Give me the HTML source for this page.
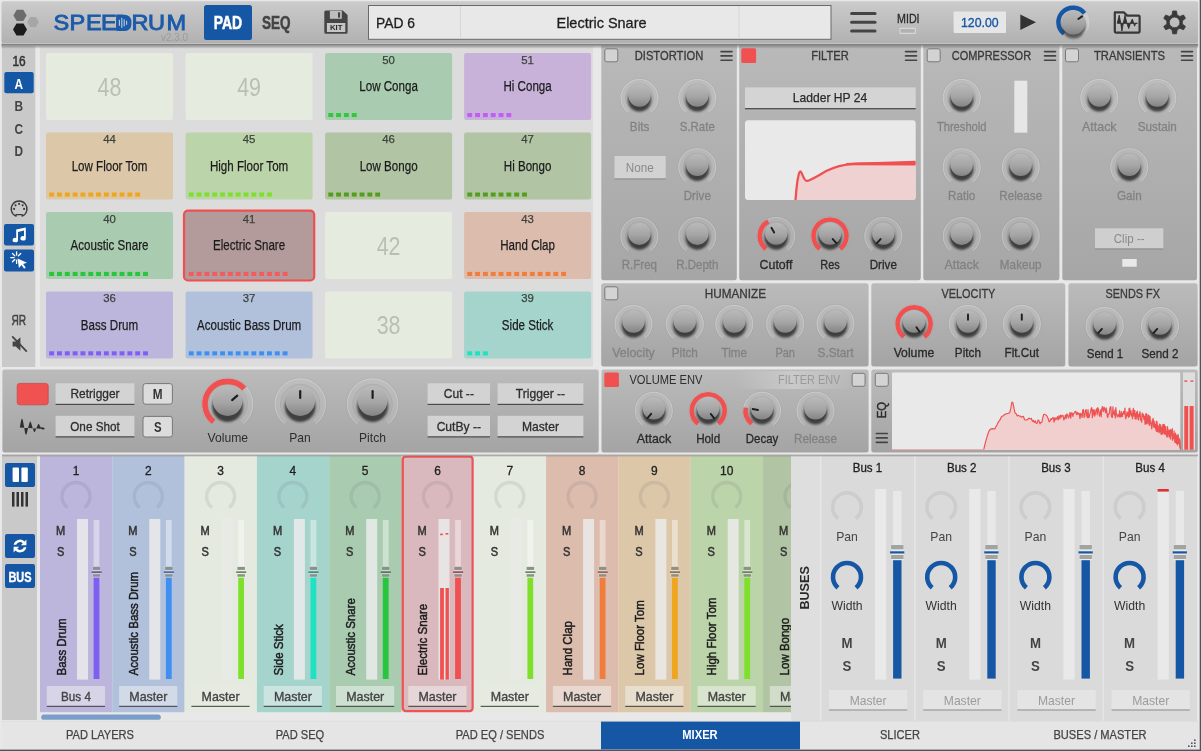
<!DOCTYPE html>
<html lang="en"><head><meta charset="utf-8"><title>Speedrum</title>
<style>html,body{margin:0;padding:0;background:#e8e8e8;overflow:hidden}svg{display:block;will-change:transform}text{font-family:"Liberation Sans",sans-serif}</style>
</head><body>
<svg width="1201" height="751" viewBox="0 0 1201 751">
<defs>
<linearGradient id="tb" x1="0" y1="0" x2="0" y2="1"><stop offset="0" stop-color="#cbcbcb"/><stop offset="1" stop-color="#b1b1b1"/></linearGradient>
<linearGradient id="pg" x1="0" y1="0" x2="0" y2="1"><stop offset="0" stop-color="#b9b9b9"/><stop offset="1" stop-color="#a6a6a6"/></linearGradient>
<linearGradient id="pg2" x1="0" y1="0" x2="0" y2="1"><stop offset="0" stop-color="#bbbbbb"/><stop offset="1" stop-color="#a4a4a4"/></linearGradient>
<linearGradient id="kg" x1="0" y1="0" x2="0" y2="1"><stop offset="0" stop-color="#bababa"/><stop offset="0.55" stop-color="#a5a5a5"/><stop offset="1" stop-color="#848484"/></linearGradient>
<filter id="bl" x="-50%" y="-50%" width="200%" height="200%"><feGaussianBlur stdDeviation="1.1"/></filter>
<filter id="bl2" x="-10%" y="-100%" width="120%" height="400%"><feGaussianBlur stdDeviation="1"/></filter>
</defs>

<rect x="0.00" y="0.00" width="1201.00" height="751.00" rx="0" fill="#e8e8e8"/>
<rect x="1.50" y="1.20" width="1196.70" height="42.20" rx="2" fill="url(#tb)"/>
<rect x="1.50" y="43.00" width="1196.70" height="1.10" rx="0" fill="#c2c2c2"/>
<polygon points="26.60,15.40 23.30,21.12 16.70,21.12 13.40,15.40 16.70,9.68 23.30,9.68" fill="#6c6c6c"/>
<polygon points="38.80,22.00 35.90,27.02 30.10,27.02 27.20,22.00 30.10,16.98 35.90,16.98" fill="#a6a6a6"/>
<polygon points="27.00,29.50 23.50,35.56 16.50,35.56 13.00,29.50 16.50,23.44 23.50,23.44" fill="#1c1c1c"/>
<text x="48.55 63.12 78.12 91.75 104.39 119.57 134.58 151.31" y="30.4" font-size="21.4" fill="#1b5ba9" stroke="#1b5ba9" stroke-width="0.85" transform="scale(1.1,1)">SPEEDRUM</text>
<path d="M116.5 14.9h8.6a6.3 6.3 0 0 1 6.3 6.3v3.4a6.3 6.3 0 0 1 -6.3 6.3h-8.6z" fill="#1b5ba9"/>
<rect x="118.85" y="19.80" width="1.10" height="6.00" rx="0" fill="#c4cbd6"/>
<rect x="121.25" y="17.80" width="1.10" height="10.00" rx="0" fill="#c4cbd6"/>
<rect x="123.65" y="19.30" width="1.10" height="7.00" rx="0" fill="#c4cbd6"/>
<rect x="126.05" y="20.80" width="1.10" height="4.00" rx="0" fill="#c4cbd6"/>
<text x="161.00" y="41.00" font-size="10" fill="#9a9a9a" textLength="27.00" lengthAdjust="spacingAndGlyphs">v2.3.0</text>
<rect x="204.00" y="5.00" width="48.00" height="35.00" rx="2.5" fill="#1657a5"/>
<text x="213.80" y="29.00" font-size="18.2" font-weight="bold" fill="#fff" textLength="28.40" lengthAdjust="spacingAndGlyphs" stroke="#fff" stroke-width="0.5">PAD</text>
<text x="261.90" y="29.00" font-size="18.2" font-weight="bold" fill="#444" textLength="28.60" lengthAdjust="spacingAndGlyphs" stroke="#444" stroke-width="0.5">SEQ</text>
<path d="M325.8 10.6h17l4.8 4.4v17.3a1.5 1.5 0 0 1 -1.5 1.5h-20.3a1.5 1.5 0 0 1 -1.5 -1.5v-20.2a1.5 1.5 0 0 1 1.5 -1.5z" fill="#454545"/>
<rect x="329.90" y="10.90" width="11.90" height="7.90" rx="0" fill="#bebebe"/>
<rect x="338.00" y="12.30" width="2.10" height="5.30" rx="0" fill="#454545"/>
<rect x="326.90" y="23.00" width="18.40" height="9.00" rx="0" fill="#c6c6c6"/>
<text x="329.90" y="29.90" font-size="6.4" font-weight="bold" fill="#2a2a2a" textLength="12.60" lengthAdjust="spacingAndGlyphs">KIT</text>
<rect x="368.50" y="5.50" width="462.50" height="33.80" rx="0" fill="#e8e8e8" stroke="#6a6a6a" stroke-width="1"/>
<rect x="460.00" y="6.00" width="1.00" height="33.00" rx="0" fill="#d6d6d6"/>
<rect x="738.50" y="6.00" width="1.00" height="33.00" rx="0" fill="#d6d6d6"/>
<text x="376.00" y="27.60" font-size="14.6" fill="#1e1e1e" textLength="39.00" lengthAdjust="spacingAndGlyphs" stroke="#1e1e1e" stroke-width="0.3">PAD 6</text>
<text x="556.50" y="27.60" font-size="14.6" fill="#1e1e1e" textLength="90.00" lengthAdjust="spacingAndGlyphs" stroke="#1e1e1e" stroke-width="0.3">Electric Snare</text>
<line x1="851.6" y1="13.6" x2="875" y2="13.6" stroke="#444" stroke-width="3.0" stroke-linecap="round"/>
<line x1="851.6" y1="22.3" x2="875" y2="22.3" stroke="#444" stroke-width="3.0" stroke-linecap="round"/>
<line x1="851.6" y1="31.0" x2="875" y2="31.0" stroke="#444" stroke-width="3.0" stroke-linecap="round"/>
<text x="897.00" y="22.50" font-size="12.4" fill="#2c2c2c" textLength="22.60" lengthAdjust="spacingAndGlyphs" stroke="#2c2c2c" stroke-width="0.3">MIDI</text>
<rect x="900.00" y="28.40" width="15.40" height="5.00" rx="0.5" fill="#b2b2b2" stroke="#d8d8d8" stroke-width="1.1"/>
<rect x="953.60" y="11.40" width="52.40" height="21.60" rx="1" fill="#e6e6e6"/>
<text x="961.00" y="27.00" font-size="13.4" fill="#1657a5" textLength="37.60" lengthAdjust="spacingAndGlyphs" stroke="#1657a5" stroke-width="0.35">120.00</text>
<path d="M1020.3 14.4L1036 22.2L1020.3 30z" fill="#333"/>
<path d="M1064.01 33.80A14.6 14.6 0 1 1 1081.99 33.80" fill="none" stroke="#9a9a9a" stroke-width="5.2" stroke-linecap="butt" opacity="0.25"/>
<path d="M1064.01 33.80A14.6 14.6 0 1 1 1081.99 33.80" fill="none" stroke="#cdcdcd" stroke-width="4.2" stroke-linecap="butt"/>
<path d="M1064.01 33.80A14.6 14.6 0 1 1 1084.50 13.31" fill="none" stroke="#1657a5" stroke-width="4.4" stroke-linecap="butt"/>
<circle cx="1073.6" cy="26.4" r="12" fill="#333" opacity="0.7" filter="url(#bl)"/>
<circle cx="1073.4" cy="22.4" r="12" fill="url(#kg)"/>
<line x1="1078.31" y1="18.96" x2="1082.08" y2="16.32" stroke="#222" stroke-width="2" stroke-linecap="round"/>
<path d="M1114.8 12.4h9l3.4 3.2h11.4a1 1 0 0 1 1 1v15a1 1 0 0 1 -1 1h-22.8a1 1 0 0 1 -1 -1v-18.2a1 1 0 0 1 1 -1z" fill="none" stroke="#383838" stroke-width="2.2" stroke-linejoin="round"/>
<path d="M1117.3 23.3L1119.2 15.2L1120.8 23.3L1121.9 31L1123.3 23.3L1125 15.2L1126.9 23.3L1128.7 28.6L1130.4 23.3L1132.3 19L1133.7 23.3L1134.6 26.2L1135.6 23.3L1137.4 23.3Z" fill="#303030" stroke="#303030" stroke-width="0.9" stroke-linejoin="round"/>
<path d="M1172.69,10.96 L1176.51,10.96 L1177.17,14.93 L1179.78,16.44 L1183.55,15.02 L1185.47,18.34 L1182.35,20.89 L1182.35,23.91 L1185.47,26.46 L1183.55,29.78 L1179.78,28.36 L1177.17,29.87 L1176.51,33.84 L1172.69,33.84 L1172.03,29.87 L1169.42,28.36 L1165.65,29.78 L1163.73,26.46 L1166.85,23.91 L1166.85,20.89 L1163.73,18.34 L1165.65,15.02 L1169.42,16.44 L1172.03,14.93Z M1179.8999999999999 22.4a5.3 5.3 0 1 0 -10.6 0a5.3 5.3 0 1 0 10.6 0z" fill="#3a3a3a" fill-rule="evenodd" stroke="#3a3a3a" stroke-width="0.8" stroke-linejoin="round"/>
<rect x="2.00" y="46.00" width="33.30" height="321.00" rx="0" fill="#c9c9c9"/>
<rect x="40.00" y="46.00" width="553.00" height="320.60" rx="0" fill="#dcdcdc"/>
<text x="12.50" y="65.80" font-size="14" fill="#333" textLength="13.20" lengthAdjust="spacingAndGlyphs" stroke="#333" stroke-width="0.55">16</text>
<rect x="4.30" y="72.00" width="29.40" height="21.30" rx="2" fill="#1657a5"/>
<text x="14.62" y="88.60" font-size="14.8" font-weight="bold" fill="#fff" textLength="8.55" lengthAdjust="spacingAndGlyphs">A</text>
<text x="14.62" y="111.10" font-size="14.8" font-weight="bold" fill="#444" textLength="8.55" lengthAdjust="spacingAndGlyphs">B</text>
<text x="14.62" y="133.60" font-size="14.8" font-weight="bold" fill="#444" textLength="8.55" lengthAdjust="spacingAndGlyphs">C</text>
<text x="14.62" y="156.10" font-size="14.8" font-weight="bold" fill="#444" textLength="8.55" lengthAdjust="spacingAndGlyphs">D</text>
<path d="M16 216.17a7.9 7.9 0 1 1 6.2 0v-1.5h-6.2z" fill="none" stroke="#3c3c3c" stroke-width="1.3" stroke-linejoin="round"/>
<circle cx="14.10" cy="208.90" r="1.05" fill="#3c3c3c"/>
<circle cx="15.56" cy="205.36" r="1.05" fill="#3c3c3c"/>
<circle cx="19.10" cy="203.90" r="1.05" fill="#3c3c3c"/>
<circle cx="22.64" cy="205.36" r="1.05" fill="#3c3c3c"/>
<circle cx="24.10" cy="208.90" r="1.05" fill="#3c3c3c"/>
<rect x="4.00" y="224.00" width="30.00" height="21.60" rx="2" fill="#1657a5"/>
<path d="M16.2 229.6l9.6 -2v10.6a2.7 2.2 0 1 1 -1.8 -2v-5.6l-6 1.3v8a2.7 2.2 0 1 1 -1.8 -2z" fill="#fff"/>
<rect x="4.00" y="249.60" width="30.00" height="21.90" rx="2" fill="#1657a5"/>
<path d="M17.6 258.6l9.4 4.2 -3.9 1.2 2.6 3.6 -1.6 1.1 -2.6 -3.6 -2.6 3z" fill="#fff"/>
<line x1="14.00" y1="257.60" x2="10.80" y2="257.60" stroke="#fff" stroke-width="1.3" stroke-linecap="round"/>
<line x1="14.76" y1="255.76" x2="12.50" y2="253.50" stroke="#fff" stroke-width="1.3" stroke-linecap="round"/>
<line x1="16.60" y1="255.00" x2="16.60" y2="251.80" stroke="#fff" stroke-width="1.3" stroke-linecap="round"/>
<line x1="18.44" y1="255.76" x2="20.70" y2="253.50" stroke="#fff" stroke-width="1.3" stroke-linecap="round"/>
<line x1="14.76" y1="259.44" x2="12.50" y2="261.70" stroke="#fff" stroke-width="1.3" stroke-linecap="round"/>
<line x1="16.60" y1="260.20" x2="16.60" y2="263.40" stroke="#fff" stroke-width="1.3" stroke-linecap="round"/>
<text x="11.50" y="324.80" font-size="14" fill="#444" textLength="14.60" lengthAdjust="spacingAndGlyphs" stroke="#444" stroke-width="0.5">ЯR</text>
<path d="M12.6 341.4h3.2l4.6 -4.2v13.6l-4.6 -4.2h-3.2z" fill="#444"/>
<line x1="12.2" y1="336.4" x2="26.8" y2="351.6" stroke="#444" stroke-width="1.8"/>
<rect x="46.00" y="53.10" width="127.00" height="67.00" rx="2" fill="#e6ebe0"/>
<text x="97.54" y="95.70" font-size="25" fill="#b9c0b3" textLength="23.91" lengthAdjust="spacingAndGlyphs">48</text>
<rect x="185.60" y="53.10" width="127.00" height="67.00" rx="2" fill="#e6ebe0"/>
<text x="237.14" y="95.70" font-size="25" fill="#b9c0b3" textLength="23.91" lengthAdjust="spacingAndGlyphs">49</text>
<rect x="325.10" y="53.10" width="127.00" height="67.00" rx="2" fill="#a9ccb0"/>
<text x="382.28" y="63.60" font-size="11.6" fill="#3c423c" textLength="12.64" lengthAdjust="spacingAndGlyphs" stroke="#3c423c" stroke-width="0.25">50</text>
<text x="359.31" y="91.20" font-size="15.4" fill="#1c1c1c" textLength="58.58" lengthAdjust="spacingAndGlyphs" stroke="#1c1c1c" stroke-width="0.25">Low Conga</text>
<rect x="328.30" y="113.00" width="4.90" height="4.10" rx="0" fill="#2fc83e"/>
<rect x="336.12" y="113.00" width="4.90" height="4.10" rx="0" fill="#2fc83e"/>
<rect x="343.94" y="113.00" width="4.90" height="4.10" rx="0" fill="#2fc83e"/>
<rect x="351.76" y="113.00" width="4.90" height="4.10" rx="0" fill="#2fc83e"/>
<rect x="464.10" y="53.10" width="127.00" height="67.00" rx="2" fill="#c8b2d9"/>
<text x="521.28" y="63.60" font-size="11.6" fill="#3c423c" textLength="12.64" lengthAdjust="spacingAndGlyphs" stroke="#3c423c" stroke-width="0.25">51</text>
<text x="503.46" y="91.20" font-size="15.4" fill="#1c1c1c" textLength="48.28" lengthAdjust="spacingAndGlyphs" stroke="#1c1c1c" stroke-width="0.25">Hi Conga</text>
<rect x="467.30" y="113.00" width="4.90" height="4.10" rx="0" fill="#c05ef2"/>
<rect x="475.12" y="113.00" width="4.90" height="4.10" rx="0" fill="#c05ef2"/>
<rect x="482.94" y="113.00" width="4.90" height="4.10" rx="0" fill="#c05ef2"/>
<rect x="490.76" y="113.00" width="4.90" height="4.10" rx="0" fill="#c05ef2"/>
<rect x="498.58" y="113.00" width="4.90" height="4.10" rx="0" fill="#c05ef2"/>
<rect x="506.40" y="113.00" width="4.90" height="4.10" rx="0" fill="#c05ef2"/>
<rect x="46.00" y="132.60" width="127.00" height="67.00" rx="2" fill="#dcc8a9"/>
<text x="103.18" y="143.10" font-size="11.6" fill="#3c423c" textLength="12.64" lengthAdjust="spacingAndGlyphs" stroke="#3c423c" stroke-width="0.25">44</text>
<text x="71.64" y="170.70" font-size="15.4" fill="#1c1c1c" textLength="75.73" lengthAdjust="spacingAndGlyphs" stroke="#1c1c1c" stroke-width="0.25">Low Floor Tom</text>
<rect x="49.20" y="192.50" width="4.90" height="4.10" rx="0" fill="#f0a51e"/>
<rect x="57.02" y="192.50" width="4.90" height="4.10" rx="0" fill="#f0a51e"/>
<rect x="64.84" y="192.50" width="4.90" height="4.10" rx="0" fill="#f0a51e"/>
<rect x="72.66" y="192.50" width="4.90" height="4.10" rx="0" fill="#f0a51e"/>
<rect x="80.48" y="192.50" width="4.90" height="4.10" rx="0" fill="#f0a51e"/>
<rect x="88.30" y="192.50" width="4.90" height="4.10" rx="0" fill="#f0a51e"/>
<rect x="96.12" y="192.50" width="4.90" height="4.10" rx="0" fill="#f0a51e"/>
<rect x="103.94" y="192.50" width="4.90" height="4.10" rx="0" fill="#f0a51e"/>
<rect x="111.76" y="192.50" width="4.90" height="4.10" rx="0" fill="#f0a51e"/>
<rect x="119.58" y="192.50" width="4.90" height="4.10" rx="0" fill="#f0a51e"/>
<rect x="127.40" y="192.50" width="4.90" height="4.10" rx="0" fill="#f0a51e"/>
<rect x="135.22" y="192.50" width="4.90" height="4.10" rx="0" fill="#f0a51e"/>
<rect x="185.60" y="132.60" width="127.00" height="67.00" rx="2" fill="#bcd4a9"/>
<text x="242.78" y="143.10" font-size="11.6" fill="#3c423c" textLength="12.64" lengthAdjust="spacingAndGlyphs" stroke="#3c423c" stroke-width="0.25">45</text>
<text x="209.95" y="170.70" font-size="15.4" fill="#1c1c1c" textLength="78.30" lengthAdjust="spacingAndGlyphs" stroke="#1c1c1c" stroke-width="0.25">High Floor Tom</text>
<rect x="188.80" y="192.50" width="4.90" height="4.10" rx="0" fill="#7fe02c"/>
<rect x="196.62" y="192.50" width="4.90" height="4.10" rx="0" fill="#7fe02c"/>
<rect x="204.44" y="192.50" width="4.90" height="4.10" rx="0" fill="#7fe02c"/>
<rect x="212.26" y="192.50" width="4.90" height="4.10" rx="0" fill="#7fe02c"/>
<rect x="220.08" y="192.50" width="4.90" height="4.10" rx="0" fill="#7fe02c"/>
<rect x="227.90" y="192.50" width="4.90" height="4.10" rx="0" fill="#7fe02c"/>
<rect x="235.72" y="192.50" width="4.90" height="4.10" rx="0" fill="#7fe02c"/>
<rect x="243.54" y="192.50" width="4.90" height="4.10" rx="0" fill="#7fe02c"/>
<rect x="251.36" y="192.50" width="4.90" height="4.10" rx="0" fill="#7fe02c"/>
<rect x="259.18" y="192.50" width="4.90" height="4.10" rx="0" fill="#7fe02c"/>
<rect x="267.00" y="192.50" width="4.90" height="4.10" rx="0" fill="#7fe02c"/>
<rect x="325.10" y="132.60" width="127.00" height="67.00" rx="2" fill="#b1c4a3"/>
<text x="382.28" y="143.10" font-size="11.6" fill="#3c423c" textLength="12.64" lengthAdjust="spacingAndGlyphs" stroke="#3c423c" stroke-width="0.25">46</text>
<text x="359.63" y="170.70" font-size="15.4" fill="#1c1c1c" textLength="57.95" lengthAdjust="spacingAndGlyphs" stroke="#1c1c1c" stroke-width="0.25">Low Bongo</text>
<rect x="328.30" y="192.50" width="4.90" height="4.10" rx="0" fill="#559e1c"/>
<rect x="336.12" y="192.50" width="4.90" height="4.10" rx="0" fill="#559e1c"/>
<rect x="343.94" y="192.50" width="4.90" height="4.10" rx="0" fill="#559e1c"/>
<rect x="351.76" y="192.50" width="4.90" height="4.10" rx="0" fill="#559e1c"/>
<rect x="359.58" y="192.50" width="4.90" height="4.10" rx="0" fill="#559e1c"/>
<rect x="367.40" y="192.50" width="4.90" height="4.10" rx="0" fill="#559e1c"/>
<rect x="375.22" y="192.50" width="4.90" height="4.10" rx="0" fill="#559e1c"/>
<rect x="464.10" y="132.60" width="127.00" height="67.00" rx="2" fill="#b1c4a3"/>
<text x="521.28" y="143.10" font-size="11.6" fill="#3c423c" textLength="12.64" lengthAdjust="spacingAndGlyphs" stroke="#3c423c" stroke-width="0.25">47</text>
<text x="503.78" y="170.70" font-size="15.4" fill="#1c1c1c" textLength="47.64" lengthAdjust="spacingAndGlyphs" stroke="#1c1c1c" stroke-width="0.25">Hi Bongo</text>
<rect x="467.30" y="192.50" width="4.90" height="4.10" rx="0" fill="#559e1c"/>
<rect x="475.12" y="192.50" width="4.90" height="4.10" rx="0" fill="#559e1c"/>
<rect x="482.94" y="192.50" width="4.90" height="4.10" rx="0" fill="#559e1c"/>
<rect x="490.76" y="192.50" width="4.90" height="4.10" rx="0" fill="#559e1c"/>
<rect x="498.58" y="192.50" width="4.90" height="4.10" rx="0" fill="#559e1c"/>
<rect x="506.40" y="192.50" width="4.90" height="4.10" rx="0" fill="#559e1c"/>
<rect x="514.22" y="192.50" width="4.90" height="4.10" rx="0" fill="#559e1c"/>
<rect x="522.04" y="192.50" width="4.90" height="4.10" rx="0" fill="#559e1c"/>
<rect x="46.00" y="212.00" width="127.00" height="67.00" rx="2" fill="#a9ccb0"/>
<text x="103.18" y="222.50" font-size="11.6" fill="#3c423c" textLength="12.64" lengthAdjust="spacingAndGlyphs" stroke="#3c423c" stroke-width="0.25">40</text>
<text x="70.56" y="250.10" font-size="15.4" fill="#1c1c1c" textLength="77.88" lengthAdjust="spacingAndGlyphs" stroke="#1c1c1c" stroke-width="0.25">Acoustic Snare</text>
<rect x="49.20" y="271.90" width="4.90" height="4.10" rx="0" fill="#27c63c"/>
<rect x="57.02" y="271.90" width="4.90" height="4.10" rx="0" fill="#27c63c"/>
<rect x="64.84" y="271.90" width="4.90" height="4.10" rx="0" fill="#27c63c"/>
<rect x="72.66" y="271.90" width="4.90" height="4.10" rx="0" fill="#27c63c"/>
<rect x="80.48" y="271.90" width="4.90" height="4.10" rx="0" fill="#27c63c"/>
<rect x="88.30" y="271.90" width="4.90" height="4.10" rx="0" fill="#27c63c"/>
<rect x="96.12" y="271.90" width="4.90" height="4.10" rx="0" fill="#27c63c"/>
<rect x="103.94" y="271.90" width="4.90" height="4.10" rx="0" fill="#27c63c"/>
<rect x="111.76" y="271.90" width="4.90" height="4.10" rx="0" fill="#27c63c"/>
<rect x="119.58" y="271.90" width="4.90" height="4.10" rx="0" fill="#27c63c"/>
<rect x="127.40" y="271.90" width="4.90" height="4.10" rx="0" fill="#27c63c"/>
<rect x="135.22" y="271.90" width="4.90" height="4.10" rx="0" fill="#27c63c"/>
<rect x="143.04" y="271.90" width="4.90" height="4.10" rx="0" fill="#27c63c"/>
<rect x="184.00" y="210.70" width="130.20" height="69.80" rx="4" fill="#b39a9b" stroke="#ee5052" stroke-width="2.2"/>
<text x="242.78" y="222.50" font-size="11.6" fill="#3c423c" textLength="12.64" lengthAdjust="spacingAndGlyphs" stroke="#3c423c" stroke-width="0.25">41</text>
<text x="213.06" y="250.10" font-size="15.4" fill="#1c1c1c" textLength="72.08" lengthAdjust="spacingAndGlyphs" stroke="#1c1c1c" stroke-width="0.25">Electric Snare</text>
<rect x="188.80" y="271.90" width="4.90" height="4.10" rx="0" fill="#f25c5c"/>
<rect x="196.62" y="271.90" width="4.90" height="4.10" rx="0" fill="#f25c5c"/>
<rect x="204.44" y="271.90" width="4.90" height="4.10" rx="0" fill="#f25c5c"/>
<rect x="212.26" y="271.90" width="4.90" height="4.10" rx="0" fill="#f25c5c"/>
<rect x="220.08" y="271.90" width="4.90" height="4.10" rx="0" fill="#f25c5c"/>
<rect x="227.90" y="271.90" width="4.90" height="4.10" rx="0" fill="#f25c5c"/>
<rect x="235.72" y="271.90" width="4.90" height="4.10" rx="0" fill="#f25c5c"/>
<rect x="243.54" y="271.90" width="4.90" height="4.10" rx="0" fill="#f25c5c"/>
<rect x="251.36" y="271.90" width="4.90" height="4.10" rx="0" fill="#f25c5c"/>
<rect x="259.18" y="271.90" width="4.90" height="4.10" rx="0" fill="#f25c5c"/>
<rect x="267.00" y="271.90" width="4.90" height="4.10" rx="0" fill="#f25c5c"/>
<rect x="274.82" y="271.90" width="4.90" height="4.10" rx="0" fill="#f25c5c"/>
<rect x="282.64" y="271.90" width="4.90" height="4.10" rx="0" fill="#f25c5c"/>
<rect x="325.10" y="212.00" width="127.00" height="67.00" rx="2" fill="#e6ebe0"/>
<text x="376.64" y="254.60" font-size="25" fill="#b9c0b3" textLength="23.91" lengthAdjust="spacingAndGlyphs">42</text>
<rect x="464.10" y="212.00" width="127.00" height="67.00" rx="2" fill="#dcbcad"/>
<text x="521.28" y="222.50" font-size="11.6" fill="#3c423c" textLength="12.64" lengthAdjust="spacingAndGlyphs" stroke="#3c423c" stroke-width="0.25">43</text>
<text x="500.24" y="250.10" font-size="15.4" fill="#1c1c1c" textLength="54.72" lengthAdjust="spacingAndGlyphs" stroke="#1c1c1c" stroke-width="0.25">Hand Clap</text>
<rect x="467.30" y="271.90" width="4.90" height="4.10" rx="0" fill="#f07d3c"/>
<rect x="475.12" y="271.90" width="4.90" height="4.10" rx="0" fill="#f07d3c"/>
<rect x="482.94" y="271.90" width="4.90" height="4.10" rx="0" fill="#f07d3c"/>
<rect x="490.76" y="271.90" width="4.90" height="4.10" rx="0" fill="#f07d3c"/>
<rect x="498.58" y="271.90" width="4.90" height="4.10" rx="0" fill="#f07d3c"/>
<rect x="506.40" y="271.90" width="4.90" height="4.10" rx="0" fill="#f07d3c"/>
<rect x="514.22" y="271.90" width="4.90" height="4.10" rx="0" fill="#f07d3c"/>
<rect x="522.04" y="271.90" width="4.90" height="4.10" rx="0" fill="#f07d3c"/>
<rect x="529.86" y="271.90" width="4.90" height="4.10" rx="0" fill="#f07d3c"/>
<rect x="537.68" y="271.90" width="4.90" height="4.10" rx="0" fill="#f07d3c"/>
<rect x="545.50" y="271.90" width="4.90" height="4.10" rx="0" fill="#f07d3c"/>
<rect x="553.32" y="271.90" width="4.90" height="4.10" rx="0" fill="#f07d3c"/>
<rect x="561.14" y="271.90" width="4.90" height="4.10" rx="0" fill="#f07d3c"/>
<rect x="46.00" y="291.40" width="127.00" height="67.00" rx="2" fill="#bcb5dc"/>
<text x="103.18" y="301.90" font-size="11.6" fill="#3c423c" textLength="12.64" lengthAdjust="spacingAndGlyphs" stroke="#3c423c" stroke-width="0.25">36</text>
<text x="80.87" y="329.50" font-size="15.4" fill="#1c1c1c" textLength="57.27" lengthAdjust="spacingAndGlyphs" stroke="#1c1c1c" stroke-width="0.25">Bass Drum</text>
<rect x="49.20" y="351.30" width="4.90" height="4.10" rx="0" fill="#7f5ff2"/>
<rect x="57.02" y="351.30" width="4.90" height="4.10" rx="0" fill="#7f5ff2"/>
<rect x="64.84" y="351.30" width="4.90" height="4.10" rx="0" fill="#7f5ff2"/>
<rect x="72.66" y="351.30" width="4.90" height="4.10" rx="0" fill="#7f5ff2"/>
<rect x="80.48" y="351.30" width="4.90" height="4.10" rx="0" fill="#7f5ff2"/>
<rect x="88.30" y="351.30" width="4.90" height="4.10" rx="0" fill="#7f5ff2"/>
<rect x="96.12" y="351.30" width="4.90" height="4.10" rx="0" fill="#7f5ff2"/>
<rect x="103.94" y="351.30" width="4.90" height="4.10" rx="0" fill="#7f5ff2"/>
<rect x="111.76" y="351.30" width="4.90" height="4.10" rx="0" fill="#7f5ff2"/>
<rect x="119.58" y="351.30" width="4.90" height="4.10" rx="0" fill="#7f5ff2"/>
<rect x="127.40" y="351.30" width="4.90" height="4.10" rx="0" fill="#7f5ff2"/>
<rect x="135.22" y="351.30" width="4.90" height="4.10" rx="0" fill="#7f5ff2"/>
<rect x="143.04" y="351.30" width="4.90" height="4.10" rx="0" fill="#7f5ff2"/>
<rect x="185.60" y="291.40" width="127.00" height="67.00" rx="2" fill="#b1c1dc"/>
<text x="242.78" y="301.90" font-size="11.6" fill="#3c423c" textLength="12.64" lengthAdjust="spacingAndGlyphs" stroke="#3c423c" stroke-width="0.25">37</text>
<text x="196.97" y="329.50" font-size="15.4" fill="#1c1c1c" textLength="104.25" lengthAdjust="spacingAndGlyphs" stroke="#1c1c1c" stroke-width="0.25">Acoustic Bass Drum</text>
<rect x="188.80" y="351.30" width="4.90" height="4.10" rx="0" fill="#3f8ff2"/>
<rect x="196.62" y="351.30" width="4.90" height="4.10" rx="0" fill="#3f8ff2"/>
<rect x="204.44" y="351.30" width="4.90" height="4.10" rx="0" fill="#3f8ff2"/>
<rect x="212.26" y="351.30" width="4.90" height="4.10" rx="0" fill="#3f8ff2"/>
<rect x="220.08" y="351.30" width="4.90" height="4.10" rx="0" fill="#3f8ff2"/>
<rect x="227.90" y="351.30" width="4.90" height="4.10" rx="0" fill="#3f8ff2"/>
<rect x="235.72" y="351.30" width="4.90" height="4.10" rx="0" fill="#3f8ff2"/>
<rect x="243.54" y="351.30" width="4.90" height="4.10" rx="0" fill="#3f8ff2"/>
<rect x="251.36" y="351.30" width="4.90" height="4.10" rx="0" fill="#3f8ff2"/>
<rect x="259.18" y="351.30" width="4.90" height="4.10" rx="0" fill="#3f8ff2"/>
<rect x="267.00" y="351.30" width="4.90" height="4.10" rx="0" fill="#3f8ff2"/>
<rect x="274.82" y="351.30" width="4.90" height="4.10" rx="0" fill="#3f8ff2"/>
<rect x="282.64" y="351.30" width="4.90" height="4.10" rx="0" fill="#3f8ff2"/>
<rect x="325.10" y="291.40" width="127.00" height="67.00" rx="2" fill="#e6ebe0"/>
<text x="376.64" y="334.00" font-size="25" fill="#b9c0b3" textLength="23.91" lengthAdjust="spacingAndGlyphs">38</text>
<rect x="464.10" y="291.40" width="127.00" height="67.00" rx="2" fill="#a5d4cc"/>
<text x="521.28" y="301.90" font-size="11.6" fill="#3c423c" textLength="12.64" lengthAdjust="spacingAndGlyphs" stroke="#3c423c" stroke-width="0.25">39</text>
<text x="501.85" y="329.50" font-size="15.4" fill="#1c1c1c" textLength="51.49" lengthAdjust="spacingAndGlyphs" stroke="#1c1c1c" stroke-width="0.25">Side Stick</text>
<rect x="467.30" y="351.30" width="4.90" height="4.10" rx="0" fill="#1fe2c3"/>
<rect x="475.12" y="351.30" width="4.90" height="4.10" rx="0" fill="#1fe2c3"/>
<rect x="482.94" y="351.30" width="4.90" height="4.10" rx="0" fill="#1fe2c3"/>
<rect x="601.30" y="45.20" width="135.50" height="235.10" rx="2.5" fill="url(#pg)"/>
<rect x="739.20" y="45.20" width="181.60" height="235.10" rx="2.5" fill="url(#pg)"/>
<rect x="923.30" y="45.20" width="136.10" height="235.10" rx="2.5" fill="url(#pg)"/>
<rect x="1062.30" y="45.20" width="134.70" height="235.10" rx="2.5" fill="url(#pg)"/>
<rect x="601.30" y="45.20" width="135.50" height="4.00" rx="0" fill="#b9b9b9"/>
<rect x="739.20" y="45.20" width="181.60" height="4.00" rx="0" fill="#b9b9b9"/>
<rect x="923.30" y="45.20" width="136.10" height="4.00" rx="0" fill="#b9b9b9"/>
<rect x="1062.30" y="45.20" width="134.70" height="4.00" rx="0" fill="#b9b9b9"/>
<rect x="604.80" y="48.80" width="13.00" height="13.00" rx="2" fill="#d3d3d3" stroke="#787878" stroke-width="1"/>
<text x="634.75" y="59.80" font-size="12" fill="#3a3a3a" textLength="68.50" lengthAdjust="spacingAndGlyphs" stroke="#3a3a3a" stroke-width="0.3">DISTORTION</text>
<line x1="721" y1="51.6" x2="732" y2="51.6" stroke="#444" stroke-width="1.6" stroke-linecap="round"/>
<line x1="721" y1="55.9" x2="732" y2="55.9" stroke="#444" stroke-width="1.6" stroke-linecap="round"/>
<line x1="721" y1="60.2" x2="732" y2="60.2" stroke="#444" stroke-width="1.6" stroke-linecap="round"/>
<path d="M629.34 110.90A16.5 16.5 0 1 1 649.66 110.90" fill="none" stroke="#ffffff" stroke-width="4.6" stroke-linecap="butt" opacity="0.09"/>
<path d="M627.59 113.15A19.35 19.35 0 1 1 651.41 113.15" fill="none" stroke="#6a6a6a" stroke-width="0.7" stroke-linecap="butt" opacity="0.16"/>
<path d="M628.05 112.56A18.6 18.6 0 1 1 650.95 112.56" fill="none" stroke="#ffffff" stroke-width="0.9" stroke-linecap="butt" opacity="0.3"/>
<path d="M630.82 109.01A14.1 14.1 0 1 1 648.18 109.01" fill="none" stroke="#606060" stroke-width="0.8" stroke-linecap="butt" opacity="0.13"/>
<circle cx="639.50" cy="99.90" r="11.7" fill="#2a2a2a" opacity="0.84" filter="url(#bl)"/>
<circle cx="639.50" cy="95.50" r="11.2" fill="url(#kg)"/>
<path d="M687.14 110.90A16.5 16.5 0 1 1 707.46 110.90" fill="none" stroke="#ffffff" stroke-width="4.6" stroke-linecap="butt" opacity="0.09"/>
<path d="M685.39 113.15A19.35 19.35 0 1 1 709.21 113.15" fill="none" stroke="#6a6a6a" stroke-width="0.7" stroke-linecap="butt" opacity="0.16"/>
<path d="M685.85 112.56A18.6 18.6 0 1 1 708.75 112.56" fill="none" stroke="#ffffff" stroke-width="0.9" stroke-linecap="butt" opacity="0.3"/>
<path d="M688.62 109.01A14.1 14.1 0 1 1 705.98 109.01" fill="none" stroke="#606060" stroke-width="0.8" stroke-linecap="butt" opacity="0.13"/>
<circle cx="697.30" cy="99.90" r="11.7" fill="#2a2a2a" opacity="0.84" filter="url(#bl)"/>
<circle cx="697.30" cy="95.50" r="11.2" fill="url(#kg)"/>
<text x="629.85" y="130.60" font-size="12.6" fill="#828282" textLength="19.50" lengthAdjust="spacingAndGlyphs" stroke="#828282" stroke-width="0.3">Bits</text>
<text x="679.80" y="130.60" font-size="12.6" fill="#828282" textLength="35.00" lengthAdjust="spacingAndGlyphs" stroke="#828282" stroke-width="0.3">S.Rate</text>
<rect x="614.50" y="156.00" width="51.20" height="22.60" rx="0" fill="#d2d2d2"/>
<rect x="614.50" y="178.40" width="51.20" height="1.20" rx="0" fill="#8f8f8f"/>
<text x="625.80" y="171.60" font-size="12.6" fill="#8a8a8a" textLength="28.00" lengthAdjust="spacingAndGlyphs">None</text>
<path d="M687.14 180.20A16.5 16.5 0 1 1 707.46 180.20" fill="none" stroke="#ffffff" stroke-width="4.6" stroke-linecap="butt" opacity="0.09"/>
<path d="M685.39 182.45A19.35 19.35 0 1 1 709.21 182.45" fill="none" stroke="#6a6a6a" stroke-width="0.7" stroke-linecap="butt" opacity="0.16"/>
<path d="M685.85 181.86A18.6 18.6 0 1 1 708.75 181.86" fill="none" stroke="#ffffff" stroke-width="0.9" stroke-linecap="butt" opacity="0.3"/>
<path d="M688.62 178.31A14.1 14.1 0 1 1 705.98 178.31" fill="none" stroke="#606060" stroke-width="0.8" stroke-linecap="butt" opacity="0.13"/>
<circle cx="697.30" cy="169.20" r="11.7" fill="#2a2a2a" opacity="0.84" filter="url(#bl)"/>
<circle cx="697.30" cy="164.80" r="11.2" fill="url(#kg)"/>
<text x="683.70" y="199.70" font-size="12.6" fill="#828282" textLength="27.20" lengthAdjust="spacingAndGlyphs" stroke="#828282" stroke-width="0.3">Drive</text>
<path d="M629.24 249.10A16.5 16.5 0 1 1 649.56 249.10" fill="none" stroke="#ffffff" stroke-width="4.6" stroke-linecap="butt" opacity="0.09"/>
<path d="M627.49 251.35A19.35 19.35 0 1 1 651.31 251.35" fill="none" stroke="#6a6a6a" stroke-width="0.7" stroke-linecap="butt" opacity="0.16"/>
<path d="M627.95 250.76A18.6 18.6 0 1 1 650.85 250.76" fill="none" stroke="#ffffff" stroke-width="0.9" stroke-linecap="butt" opacity="0.3"/>
<path d="M630.72 247.21A14.1 14.1 0 1 1 648.08 247.21" fill="none" stroke="#606060" stroke-width="0.8" stroke-linecap="butt" opacity="0.13"/>
<circle cx="639.40" cy="238.10" r="11.7" fill="#2a2a2a" opacity="0.84" filter="url(#bl)"/>
<circle cx="639.40" cy="233.70" r="11.2" fill="url(#kg)"/>
<path d="M687.14 249.10A16.5 16.5 0 1 1 707.46 249.10" fill="none" stroke="#ffffff" stroke-width="4.6" stroke-linecap="butt" opacity="0.09"/>
<path d="M685.39 251.35A19.35 19.35 0 1 1 709.21 251.35" fill="none" stroke="#6a6a6a" stroke-width="0.7" stroke-linecap="butt" opacity="0.16"/>
<path d="M685.85 250.76A18.6 18.6 0 1 1 708.75 250.76" fill="none" stroke="#ffffff" stroke-width="0.9" stroke-linecap="butt" opacity="0.3"/>
<path d="M688.62 247.21A14.1 14.1 0 1 1 705.98 247.21" fill="none" stroke="#606060" stroke-width="0.8" stroke-linecap="butt" opacity="0.13"/>
<circle cx="697.30" cy="238.10" r="11.7" fill="#2a2a2a" opacity="0.84" filter="url(#bl)"/>
<circle cx="697.30" cy="233.70" r="11.2" fill="url(#kg)"/>
<text x="621.80" y="268.70" font-size="12.6" fill="#828282" textLength="35.20" lengthAdjust="spacingAndGlyphs" stroke="#828282" stroke-width="0.3">R.Freq</text>
<text x="676.20" y="268.70" font-size="12.6" fill="#828282" textLength="42.20" lengthAdjust="spacingAndGlyphs" stroke="#828282" stroke-width="0.3">R.Depth</text>
<rect x="741.30" y="48.20" width="14.80" height="14.80" rx="1.5" fill="#f05050"/>
<text x="811.19" y="59.80" font-size="12" fill="#3a3a3a" textLength="37.61" lengthAdjust="spacingAndGlyphs" stroke="#3a3a3a" stroke-width="0.3">FILTER</text>
<line x1="905.5" y1="51.6" x2="916.5" y2="51.6" stroke="#444" stroke-width="1.6" stroke-linecap="round"/>
<line x1="905.5" y1="55.9" x2="916.5" y2="55.9" stroke="#444" stroke-width="1.6" stroke-linecap="round"/>
<line x1="905.5" y1="60.2" x2="916.5" y2="60.2" stroke="#444" stroke-width="1.6" stroke-linecap="round"/>
<rect x="745.00" y="87.40" width="170.70" height="20.80" rx="0" fill="#d4d4d4"/>
<rect x="745.00" y="108.10" width="170.70" height="1.20" rx="0" fill="#484848"/>
<text x="792.81" y="102.00" font-size="13" fill="#2a2a2a" textLength="74.38" lengthAdjust="spacingAndGlyphs" stroke="#2a2a2a" stroke-width="0.25">Ladder HP 24</text>
<rect x="745.00" y="120.20" width="170.70" height="79.80" rx="3" fill="#e9e9e9"/>
<clipPath id="fc"><rect x="745" y="120.2" width="170.7" height="79.8" rx="3"/></clipPath>
<g clip-path="url(#fc)"><path d="M795.5 200C796.3 190 797 181 798.3 176.5C799 172.5 799.8 171.2 800.4 171.3C802 171.5 803.5 180.6 806.7 180.8C810 181 818 175.5 826.7 170.8C835 166.6 843 164.6 853.3 163.8C865 163.2 890 163.2 915.7 163V200Z" fill="#efd1d1"/><path d="M795.5 200C796.3 190 797 181 798.3 176.5C799 172.5 799.8 171.2 800.4 171.3C802 171.5 803.5 180.6 806.7 180.8C810 181 818 175.5 826.7 170.8C835 166.6 843 164.6 853.3 163.8C865 163.2 890 163.2 915.7 163" fill="none" stroke="#f05050" stroke-width="2.3"/><path d="M846 162.9L915.7 160.8V165.4L846 165.3Z" fill="#f05050"/></g>
<path d="M766.04 249.00A16.5 16.5 0 1 1 786.36 249.00" fill="none" stroke="#ffffff" stroke-width="4.6" stroke-linecap="butt" opacity="0.09"/>
<path d="M764.29 251.25A19.35 19.35 0 1 1 788.11 251.25" fill="none" stroke="#6a6a6a" stroke-width="0.7" stroke-linecap="butt" opacity="0.16"/>
<path d="M764.75 250.66A18.6 18.6 0 1 1 787.65 250.66" fill="none" stroke="#ffffff" stroke-width="0.9" stroke-linecap="butt" opacity="0.3"/>
<path d="M767.52 247.11A14.1 14.1 0 1 1 784.88 247.11" fill="none" stroke="#606060" stroke-width="0.8" stroke-linecap="butt" opacity="0.13"/>
<path d="M766.04 249.00A16.5 16.5 0 0 1 768.35 221.49" fill="none" stroke="#f05050" stroke-width="4.6" stroke-linecap="butt"/>
<circle cx="776.20" cy="238.00" r="11.7" fill="#2a2a2a" opacity="0.84" filter="url(#bl)"/>
<circle cx="776.20" cy="233.60" r="11.2" fill="url(#kg)"/>
<line x1="774.15" y1="232.45" x2="771.45" y2="227.77" stroke="#1e1e1e" stroke-width="1.9" stroke-linecap="round"/>
<path d="M819.84 249.00A16.5 16.5 0 1 1 840.16 249.00" fill="none" stroke="#ffffff" stroke-width="4.6" stroke-linecap="butt" opacity="0.09"/>
<path d="M818.09 251.25A19.35 19.35 0 1 1 841.91 251.25" fill="none" stroke="#6a6a6a" stroke-width="0.7" stroke-linecap="butt" opacity="0.16"/>
<path d="M818.55 250.66A18.6 18.6 0 1 1 841.45 250.66" fill="none" stroke="#ffffff" stroke-width="0.9" stroke-linecap="butt" opacity="0.3"/>
<path d="M821.32 247.11A14.1 14.1 0 1 1 838.68 247.11" fill="none" stroke="#606060" stroke-width="0.8" stroke-linecap="butt" opacity="0.13"/>
<path d="M819.84 249.00A16.5 16.5 0 1 1 840.16 249.00" fill="none" stroke="#f05050" stroke-width="4.6" stroke-linecap="butt"/>
<circle cx="830.00" cy="238.00" r="11.7" fill="#2a2a2a" opacity="0.84" filter="url(#bl)"/>
<circle cx="830.00" cy="233.60" r="11.2" fill="url(#kg)"/>
<line x1="832.74" y1="239.05" x2="836.36" y2="243.06" stroke="#1e1e1e" stroke-width="1.9" stroke-linecap="round"/>
<path d="M873.14 249.00A16.5 16.5 0 1 1 893.46 249.00" fill="none" stroke="#ffffff" stroke-width="4.6" stroke-linecap="butt" opacity="0.09"/>
<path d="M871.39 251.25A19.35 19.35 0 1 1 895.21 251.25" fill="none" stroke="#6a6a6a" stroke-width="0.7" stroke-linecap="butt" opacity="0.16"/>
<path d="M871.85 250.66A18.6 18.6 0 1 1 894.75 250.66" fill="none" stroke="#ffffff" stroke-width="0.9" stroke-linecap="butt" opacity="0.3"/>
<path d="M874.62 247.11A14.1 14.1 0 1 1 891.98 247.11" fill="none" stroke="#606060" stroke-width="0.8" stroke-linecap="butt" opacity="0.13"/>
<circle cx="883.30" cy="238.00" r="11.7" fill="#2a2a2a" opacity="0.84" filter="url(#bl)"/>
<circle cx="883.30" cy="233.60" r="11.2" fill="url(#kg)"/>
<line x1="880.56" y1="239.05" x2="876.94" y2="243.06" stroke="#1e1e1e" stroke-width="1.9" stroke-linecap="round"/>
<text x="759.60" y="268.70" font-size="12.6" fill="#2a2a2a" textLength="32.80" lengthAdjust="spacingAndGlyphs" stroke="#2a2a2a" stroke-width="0.3">Cutoff</text>
<text x="820.25" y="268.70" font-size="12.6" fill="#2a2a2a" textLength="19.50" lengthAdjust="spacingAndGlyphs" stroke="#2a2a2a" stroke-width="0.3">Res</text>
<text x="869.70" y="268.70" font-size="12.6" fill="#2a2a2a" textLength="27.20" lengthAdjust="spacingAndGlyphs" stroke="#2a2a2a" stroke-width="0.3">Drive</text>
<rect x="927.20" y="48.80" width="13.00" height="13.00" rx="2" fill="#d3d3d3" stroke="#787878" stroke-width="1"/>
<text x="951.70" y="59.80" font-size="12" fill="#3a3a3a" textLength="79.40" lengthAdjust="spacingAndGlyphs" stroke="#3a3a3a" stroke-width="0.3">COMPRESSOR</text>
<line x1="1044.5" y1="51.6" x2="1055.5" y2="51.6" stroke="#444" stroke-width="1.6" stroke-linecap="round"/>
<line x1="1044.5" y1="55.9" x2="1055.5" y2="55.9" stroke="#444" stroke-width="1.6" stroke-linecap="round"/>
<line x1="1044.5" y1="60.2" x2="1055.5" y2="60.2" stroke="#444" stroke-width="1.6" stroke-linecap="round"/>
<path d="M951.54 110.90A16.5 16.5 0 1 1 971.86 110.90" fill="none" stroke="#ffffff" stroke-width="4.6" stroke-linecap="butt" opacity="0.09"/>
<path d="M949.79 113.15A19.35 19.35 0 1 1 973.61 113.15" fill="none" stroke="#6a6a6a" stroke-width="0.7" stroke-linecap="butt" opacity="0.16"/>
<path d="M950.25 112.56A18.6 18.6 0 1 1 973.15 112.56" fill="none" stroke="#ffffff" stroke-width="0.9" stroke-linecap="butt" opacity="0.3"/>
<path d="M953.02 109.01A14.1 14.1 0 1 1 970.38 109.01" fill="none" stroke="#606060" stroke-width="0.8" stroke-linecap="butt" opacity="0.13"/>
<circle cx="961.70" cy="99.90" r="11.7" fill="#2a2a2a" opacity="0.84" filter="url(#bl)"/>
<circle cx="961.70" cy="95.50" r="11.2" fill="url(#kg)"/>
<text x="936.90" y="130.60" font-size="12.6" fill="#828282" textLength="49.60" lengthAdjust="spacingAndGlyphs" stroke="#828282" stroke-width="0.3">Threshold</text>
<rect x="1014.30" y="80.70" width="13.00" height="52.00" rx="0" fill="#e6e6e6"/>
<path d="M951.54 180.20A16.5 16.5 0 1 1 971.86 180.20" fill="none" stroke="#ffffff" stroke-width="4.6" stroke-linecap="butt" opacity="0.09"/>
<path d="M949.79 182.45A19.35 19.35 0 1 1 973.61 182.45" fill="none" stroke="#6a6a6a" stroke-width="0.7" stroke-linecap="butt" opacity="0.16"/>
<path d="M950.25 181.86A18.6 18.6 0 1 1 973.15 181.86" fill="none" stroke="#ffffff" stroke-width="0.9" stroke-linecap="butt" opacity="0.3"/>
<path d="M953.02 178.31A14.1 14.1 0 1 1 970.38 178.31" fill="none" stroke="#606060" stroke-width="0.8" stroke-linecap="butt" opacity="0.13"/>
<circle cx="961.70" cy="169.20" r="11.7" fill="#2a2a2a" opacity="0.84" filter="url(#bl)"/>
<circle cx="961.70" cy="164.80" r="11.2" fill="url(#kg)"/>
<path d="M1010.54 180.20A16.5 16.5 0 1 1 1030.86 180.20" fill="none" stroke="#ffffff" stroke-width="4.6" stroke-linecap="butt" opacity="0.09"/>
<path d="M1008.79 182.45A19.35 19.35 0 1 1 1032.61 182.45" fill="none" stroke="#6a6a6a" stroke-width="0.7" stroke-linecap="butt" opacity="0.16"/>
<path d="M1009.25 181.86A18.6 18.6 0 1 1 1032.15 181.86" fill="none" stroke="#ffffff" stroke-width="0.9" stroke-linecap="butt" opacity="0.3"/>
<path d="M1012.02 178.31A14.1 14.1 0 1 1 1029.38 178.31" fill="none" stroke="#606060" stroke-width="0.8" stroke-linecap="butt" opacity="0.13"/>
<circle cx="1020.70" cy="169.20" r="11.7" fill="#2a2a2a" opacity="0.84" filter="url(#bl)"/>
<circle cx="1020.70" cy="164.80" r="11.2" fill="url(#kg)"/>
<text x="948.02" y="199.70" font-size="12.6" fill="#828282" textLength="27.35" lengthAdjust="spacingAndGlyphs" stroke="#828282" stroke-width="0.3">Ratio</text>
<text x="999.20" y="199.70" font-size="12.6" fill="#828282" textLength="42.99" lengthAdjust="spacingAndGlyphs" stroke="#828282" stroke-width="0.3">Release</text>
<path d="M951.54 249.10A16.5 16.5 0 1 1 971.86 249.10" fill="none" stroke="#ffffff" stroke-width="4.6" stroke-linecap="butt" opacity="0.09"/>
<path d="M949.79 251.35A19.35 19.35 0 1 1 973.61 251.35" fill="none" stroke="#6a6a6a" stroke-width="0.7" stroke-linecap="butt" opacity="0.16"/>
<path d="M950.25 250.76A18.6 18.6 0 1 1 973.15 250.76" fill="none" stroke="#ffffff" stroke-width="0.9" stroke-linecap="butt" opacity="0.3"/>
<path d="M953.02 247.21A14.1 14.1 0 1 1 970.38 247.21" fill="none" stroke="#606060" stroke-width="0.8" stroke-linecap="butt" opacity="0.13"/>
<circle cx="961.70" cy="238.10" r="11.7" fill="#2a2a2a" opacity="0.84" filter="url(#bl)"/>
<circle cx="961.70" cy="233.70" r="11.2" fill="url(#kg)"/>
<path d="M1010.54 249.10A16.5 16.5 0 1 1 1030.86 249.10" fill="none" stroke="#ffffff" stroke-width="4.6" stroke-linecap="butt" opacity="0.09"/>
<path d="M1008.79 251.35A19.35 19.35 0 1 1 1032.61 251.35" fill="none" stroke="#6a6a6a" stroke-width="0.7" stroke-linecap="butt" opacity="0.16"/>
<path d="M1009.25 250.76A18.6 18.6 0 1 1 1032.15 250.76" fill="none" stroke="#ffffff" stroke-width="0.9" stroke-linecap="butt" opacity="0.3"/>
<path d="M1012.02 247.21A14.1 14.1 0 1 1 1029.38 247.21" fill="none" stroke="#606060" stroke-width="0.8" stroke-linecap="butt" opacity="0.13"/>
<circle cx="1020.70" cy="238.10" r="11.7" fill="#2a2a2a" opacity="0.84" filter="url(#bl)"/>
<circle cx="1020.70" cy="233.70" r="11.2" fill="url(#kg)"/>
<text x="944.45" y="268.70" font-size="12.6" fill="#828282" textLength="34.50" lengthAdjust="spacingAndGlyphs" stroke="#828282" stroke-width="0.3">Attack</text>
<text x="999.86" y="268.70" font-size="12.6" fill="#828282" textLength="41.68" lengthAdjust="spacingAndGlyphs" stroke="#828282" stroke-width="0.3">Makeup</text>
<rect x="1065.50" y="48.80" width="13.00" height="13.00" rx="2" fill="#d3d3d3" stroke="#787878" stroke-width="1"/>
<text x="1094.00" y="59.80" font-size="12" fill="#3a3a3a" textLength="71.00" lengthAdjust="spacingAndGlyphs" stroke="#3a3a3a" stroke-width="0.3">TRANSIENTS</text>
<line x1="1181.5" y1="51.6" x2="1192.5" y2="51.6" stroke="#444" stroke-width="1.6" stroke-linecap="round"/>
<line x1="1181.5" y1="55.9" x2="1192.5" y2="55.9" stroke="#444" stroke-width="1.6" stroke-linecap="round"/>
<line x1="1181.5" y1="60.2" x2="1192.5" y2="60.2" stroke="#444" stroke-width="1.6" stroke-linecap="round"/>
<path d="M1089.14 110.90A16.5 16.5 0 1 1 1109.46 110.90" fill="none" stroke="#ffffff" stroke-width="4.6" stroke-linecap="butt" opacity="0.09"/>
<path d="M1087.39 113.15A19.35 19.35 0 1 1 1111.21 113.15" fill="none" stroke="#6a6a6a" stroke-width="0.7" stroke-linecap="butt" opacity="0.16"/>
<path d="M1087.85 112.56A18.6 18.6 0 1 1 1110.75 112.56" fill="none" stroke="#ffffff" stroke-width="0.9" stroke-linecap="butt" opacity="0.3"/>
<path d="M1090.62 109.01A14.1 14.1 0 1 1 1107.98 109.01" fill="none" stroke="#606060" stroke-width="0.8" stroke-linecap="butt" opacity="0.13"/>
<circle cx="1099.30" cy="99.90" r="11.7" fill="#2a2a2a" opacity="0.84" filter="url(#bl)"/>
<circle cx="1099.30" cy="95.50" r="11.2" fill="url(#kg)"/>
<path d="M1147.14 110.90A16.5 16.5 0 1 1 1167.46 110.90" fill="none" stroke="#ffffff" stroke-width="4.6" stroke-linecap="butt" opacity="0.09"/>
<path d="M1145.39 113.15A19.35 19.35 0 1 1 1169.21 113.15" fill="none" stroke="#6a6a6a" stroke-width="0.7" stroke-linecap="butt" opacity="0.16"/>
<path d="M1145.85 112.56A18.6 18.6 0 1 1 1168.75 112.56" fill="none" stroke="#ffffff" stroke-width="0.9" stroke-linecap="butt" opacity="0.3"/>
<path d="M1148.62 109.01A14.1 14.1 0 1 1 1165.98 109.01" fill="none" stroke="#606060" stroke-width="0.8" stroke-linecap="butt" opacity="0.13"/>
<circle cx="1157.30" cy="99.90" r="11.7" fill="#2a2a2a" opacity="0.84" filter="url(#bl)"/>
<circle cx="1157.30" cy="95.50" r="11.2" fill="url(#kg)"/>
<text x="1082.05" y="130.60" font-size="12.6" fill="#828282" textLength="34.50" lengthAdjust="spacingAndGlyphs" stroke="#828282" stroke-width="0.3">Attack</text>
<text x="1137.76" y="130.60" font-size="12.6" fill="#828282" textLength="39.08" lengthAdjust="spacingAndGlyphs" stroke="#828282" stroke-width="0.3">Sustain</text>
<path d="M1119.14 180.20A16.5 16.5 0 1 1 1139.46 180.20" fill="none" stroke="#ffffff" stroke-width="4.6" stroke-linecap="butt" opacity="0.09"/>
<path d="M1117.39 182.45A19.35 19.35 0 1 1 1141.21 182.45" fill="none" stroke="#6a6a6a" stroke-width="0.7" stroke-linecap="butt" opacity="0.16"/>
<path d="M1117.85 181.86A18.6 18.6 0 1 1 1140.75 181.86" fill="none" stroke="#ffffff" stroke-width="0.9" stroke-linecap="butt" opacity="0.3"/>
<path d="M1120.62 178.31A14.1 14.1 0 1 1 1137.98 178.31" fill="none" stroke="#606060" stroke-width="0.8" stroke-linecap="butt" opacity="0.13"/>
<circle cx="1129.30" cy="169.20" r="11.7" fill="#2a2a2a" opacity="0.84" filter="url(#bl)"/>
<circle cx="1129.30" cy="164.80" r="11.2" fill="url(#kg)"/>
<text x="1116.92" y="199.70" font-size="12.6" fill="#828282" textLength="24.75" lengthAdjust="spacingAndGlyphs" stroke="#828282" stroke-width="0.3">Gain</text>
<rect x="1095.00" y="228.30" width="68.30" height="20.30" rx="0" fill="#cfcfcf"/>
<rect x="1095.00" y="248.40" width="68.30" height="1.20" rx="0" fill="#8f8f8f"/>
<text x="1113.75" y="243.40" font-size="12.6" fill="#8a8a8a" textLength="30.91" lengthAdjust="spacingAndGlyphs">Clip --</text>
<rect x="1122.30" y="259.00" width="14.40" height="7.70" rx="0" fill="#e8e8e8"/>
<rect x="601.20" y="283.20" width="267.40" height="83.40" rx="2.5" fill="url(#pg2)"/>
<rect x="871.30" y="283.20" width="194.00" height="83.40" rx="2.5" fill="url(#pg2)"/>
<rect x="1068.40" y="283.20" width="129.20" height="83.40" rx="2.5" fill="url(#pg2)"/>
<rect x="604.80" y="286.80" width="13.00" height="13.00" rx="2" fill="#d3d3d3" stroke="#787878" stroke-width="1"/>
<text x="704.80" y="298.20" font-size="12" fill="#3a3a3a" textLength="61.20" lengthAdjust="spacingAndGlyphs" stroke="#3a3a3a" stroke-width="0.3">HUMANIZE</text>
<path d="M623.34 336.90A16.5 16.5 0 1 1 643.66 336.90" fill="none" stroke="#ffffff" stroke-width="4.6" stroke-linecap="butt" opacity="0.09"/>
<path d="M621.59 339.15A19.35 19.35 0 1 1 645.41 339.15" fill="none" stroke="#6a6a6a" stroke-width="0.7" stroke-linecap="butt" opacity="0.16"/>
<path d="M622.05 338.56A18.6 18.6 0 1 1 644.95 338.56" fill="none" stroke="#ffffff" stroke-width="0.9" stroke-linecap="butt" opacity="0.3"/>
<path d="M624.82 335.01A14.1 14.1 0 1 1 642.18 335.01" fill="none" stroke="#606060" stroke-width="0.8" stroke-linecap="butt" opacity="0.13"/>
<circle cx="633.50" cy="325.90" r="11.7" fill="#2a2a2a" opacity="0.84" filter="url(#bl)"/>
<circle cx="633.50" cy="321.50" r="11.2" fill="url(#kg)"/>
<text x="612.25" y="356.80" font-size="12.6" fill="#828282" textLength="42.50" lengthAdjust="spacingAndGlyphs" stroke="#828282" stroke-width="0.3">Velocity</text>
<path d="M674.64 336.90A16.5 16.5 0 1 1 694.96 336.90" fill="none" stroke="#ffffff" stroke-width="4.6" stroke-linecap="butt" opacity="0.09"/>
<path d="M672.89 339.15A19.35 19.35 0 1 1 696.71 339.15" fill="none" stroke="#6a6a6a" stroke-width="0.7" stroke-linecap="butt" opacity="0.16"/>
<path d="M673.35 338.56A18.6 18.6 0 1 1 696.25 338.56" fill="none" stroke="#ffffff" stroke-width="0.9" stroke-linecap="butt" opacity="0.3"/>
<path d="M676.12 335.01A14.1 14.1 0 1 1 693.48 335.01" fill="none" stroke="#606060" stroke-width="0.8" stroke-linecap="butt" opacity="0.13"/>
<circle cx="684.80" cy="325.90" r="11.7" fill="#2a2a2a" opacity="0.84" filter="url(#bl)"/>
<circle cx="684.80" cy="321.50" r="11.2" fill="url(#kg)"/>
<text x="671.77" y="356.80" font-size="12.6" fill="#828282" textLength="26.05" lengthAdjust="spacingAndGlyphs" stroke="#828282" stroke-width="0.3">Pitch</text>
<path d="M724.14 336.90A16.5 16.5 0 1 1 744.46 336.90" fill="none" stroke="#ffffff" stroke-width="4.6" stroke-linecap="butt" opacity="0.09"/>
<path d="M722.39 339.15A19.35 19.35 0 1 1 746.21 339.15" fill="none" stroke="#6a6a6a" stroke-width="0.7" stroke-linecap="butt" opacity="0.16"/>
<path d="M722.85 338.56A18.6 18.6 0 1 1 745.75 338.56" fill="none" stroke="#ffffff" stroke-width="0.9" stroke-linecap="butt" opacity="0.3"/>
<path d="M725.62 335.01A14.1 14.1 0 1 1 742.98 335.01" fill="none" stroke="#606060" stroke-width="0.8" stroke-linecap="butt" opacity="0.13"/>
<circle cx="734.30" cy="325.90" r="11.7" fill="#2a2a2a" opacity="0.84" filter="url(#bl)"/>
<circle cx="734.30" cy="321.50" r="11.2" fill="url(#kg)"/>
<text x="721.50" y="356.80" font-size="12.6" fill="#828282" textLength="25.60" lengthAdjust="spacingAndGlyphs" stroke="#828282" stroke-width="0.3">Time</text>
<path d="M775.04 336.90A16.5 16.5 0 1 1 795.36 336.90" fill="none" stroke="#ffffff" stroke-width="4.6" stroke-linecap="butt" opacity="0.09"/>
<path d="M773.29 339.15A19.35 19.35 0 1 1 797.11 339.15" fill="none" stroke="#6a6a6a" stroke-width="0.7" stroke-linecap="butt" opacity="0.16"/>
<path d="M773.75 338.56A18.6 18.6 0 1 1 796.65 338.56" fill="none" stroke="#ffffff" stroke-width="0.9" stroke-linecap="butt" opacity="0.3"/>
<path d="M776.52 335.01A14.1 14.1 0 1 1 793.88 335.01" fill="none" stroke="#606060" stroke-width="0.8" stroke-linecap="butt" opacity="0.13"/>
<circle cx="785.20" cy="325.90" r="11.7" fill="#2a2a2a" opacity="0.84" filter="url(#bl)"/>
<circle cx="785.20" cy="321.50" r="11.2" fill="url(#kg)"/>
<text x="775.45" y="356.80" font-size="12.6" fill="#828282" textLength="19.50" lengthAdjust="spacingAndGlyphs" stroke="#828282" stroke-width="0.3">Pan</text>
<path d="M825.34 336.90A16.5 16.5 0 1 1 845.66 336.90" fill="none" stroke="#ffffff" stroke-width="4.6" stroke-linecap="butt" opacity="0.09"/>
<path d="M823.59 339.15A19.35 19.35 0 1 1 847.41 339.15" fill="none" stroke="#6a6a6a" stroke-width="0.7" stroke-linecap="butt" opacity="0.16"/>
<path d="M824.05 338.56A18.6 18.6 0 1 1 846.95 338.56" fill="none" stroke="#ffffff" stroke-width="0.9" stroke-linecap="butt" opacity="0.3"/>
<path d="M826.82 335.01A14.1 14.1 0 1 1 844.18 335.01" fill="none" stroke="#606060" stroke-width="0.8" stroke-linecap="butt" opacity="0.13"/>
<circle cx="835.50" cy="325.90" r="11.7" fill="#2a2a2a" opacity="0.84" filter="url(#bl)"/>
<circle cx="835.50" cy="321.50" r="11.2" fill="url(#kg)"/>
<text x="817.59" y="356.80" font-size="12.6" fill="#828282" textLength="35.82" lengthAdjust="spacingAndGlyphs" stroke="#828282" stroke-width="0.3">S.Start</text>
<text x="941.40" y="298.20" font-size="12" fill="#3a3a3a" textLength="54.00" lengthAdjust="spacingAndGlyphs" stroke="#3a3a3a" stroke-width="0.3">VELOCITY</text>
<path d="M903.94 336.90A16.5 16.5 0 1 1 924.26 336.90" fill="none" stroke="#ffffff" stroke-width="4.6" stroke-linecap="butt" opacity="0.09"/>
<path d="M902.19 339.15A19.35 19.35 0 1 1 926.01 339.15" fill="none" stroke="#6a6a6a" stroke-width="0.7" stroke-linecap="butt" opacity="0.16"/>
<path d="M902.65 338.56A18.6 18.6 0 1 1 925.55 338.56" fill="none" stroke="#ffffff" stroke-width="0.9" stroke-linecap="butt" opacity="0.3"/>
<path d="M905.42 335.01A14.1 14.1 0 1 1 922.78 335.01" fill="none" stroke="#606060" stroke-width="0.8" stroke-linecap="butt" opacity="0.13"/>
<path d="M903.94 336.90A16.5 16.5 0 1 1 924.26 336.90" fill="none" stroke="#f05050" stroke-width="4.6" stroke-linecap="butt"/>
<circle cx="914.10" cy="325.90" r="11.7" fill="#2a2a2a" opacity="0.84" filter="url(#bl)"/>
<circle cx="914.10" cy="321.50" r="11.2" fill="url(#kg)"/>
<line x1="916.45" y1="327.26" x2="919.55" y2="331.68" stroke="#1e1e1e" stroke-width="1.9" stroke-linecap="round"/>
<path d="M957.84 336.90A16.5 16.5 0 1 1 978.16 336.90" fill="none" stroke="#ffffff" stroke-width="4.6" stroke-linecap="butt" opacity="0.09"/>
<path d="M956.09 339.15A19.35 19.35 0 1 1 979.91 339.15" fill="none" stroke="#6a6a6a" stroke-width="0.7" stroke-linecap="butt" opacity="0.16"/>
<path d="M956.55 338.56A18.6 18.6 0 1 1 979.45 338.56" fill="none" stroke="#ffffff" stroke-width="0.9" stroke-linecap="butt" opacity="0.3"/>
<path d="M959.32 335.01A14.1 14.1 0 1 1 976.68 335.01" fill="none" stroke="#606060" stroke-width="0.8" stroke-linecap="butt" opacity="0.13"/>
<circle cx="968.00" cy="325.90" r="11.7" fill="#2a2a2a" opacity="0.84" filter="url(#bl)"/>
<circle cx="968.00" cy="321.50" r="11.2" fill="url(#kg)"/>
<line x1="968.00" y1="319.80" x2="968.00" y2="314.40" stroke="#1e1e1e" stroke-width="1.9" stroke-linecap="round"/>
<path d="M1011.64 336.90A16.5 16.5 0 1 1 1031.96 336.90" fill="none" stroke="#ffffff" stroke-width="4.6" stroke-linecap="butt" opacity="0.09"/>
<path d="M1009.89 339.15A19.35 19.35 0 1 1 1033.71 339.15" fill="none" stroke="#6a6a6a" stroke-width="0.7" stroke-linecap="butt" opacity="0.16"/>
<path d="M1010.35 338.56A18.6 18.6 0 1 1 1033.25 338.56" fill="none" stroke="#ffffff" stroke-width="0.9" stroke-linecap="butt" opacity="0.3"/>
<path d="M1013.12 335.01A14.1 14.1 0 1 1 1030.48 335.01" fill="none" stroke="#606060" stroke-width="0.8" stroke-linecap="butt" opacity="0.13"/>
<circle cx="1021.80" cy="325.90" r="11.7" fill="#2a2a2a" opacity="0.84" filter="url(#bl)"/>
<circle cx="1021.80" cy="321.50" r="11.2" fill="url(#kg)"/>
<line x1="1021.80" y1="319.80" x2="1021.80" y2="314.40" stroke="#1e1e1e" stroke-width="1.9" stroke-linecap="round"/>
<text x="893.65" y="356.80" font-size="12.6" fill="#2a2a2a" textLength="40.70" lengthAdjust="spacingAndGlyphs" stroke="#2a2a2a" stroke-width="0.3">Volume</text>
<text x="954.87" y="356.80" font-size="12.6" fill="#2a2a2a" textLength="26.05" lengthAdjust="spacingAndGlyphs" stroke="#2a2a2a" stroke-width="0.3">Pitch</text>
<text x="1004.55" y="356.80" font-size="12.6" fill="#2a2a2a" textLength="34.51" lengthAdjust="spacingAndGlyphs" stroke="#2a2a2a" stroke-width="0.3">Flt.Cut</text>
<text x="1105.60" y="298.20" font-size="12" fill="#3a3a3a" textLength="54.40" lengthAdjust="spacingAndGlyphs" stroke="#3a3a3a" stroke-width="0.3">SENDS FX</text>
<path d="M1094.54 338.90A16.5 16.5 0 1 1 1114.86 338.90" fill="none" stroke="#ffffff" stroke-width="4.6" stroke-linecap="butt" opacity="0.09"/>
<path d="M1092.79 341.15A19.35 19.35 0 1 1 1116.61 341.15" fill="none" stroke="#6a6a6a" stroke-width="0.7" stroke-linecap="butt" opacity="0.16"/>
<path d="M1093.25 340.56A18.6 18.6 0 1 1 1116.15 340.56" fill="none" stroke="#ffffff" stroke-width="0.9" stroke-linecap="butt" opacity="0.3"/>
<path d="M1096.02 337.01A14.1 14.1 0 1 1 1113.38 337.01" fill="none" stroke="#606060" stroke-width="0.8" stroke-linecap="butt" opacity="0.13"/>
<circle cx="1104.70" cy="327.90" r="11.7" fill="#2a2a2a" opacity="0.84" filter="url(#bl)"/>
<circle cx="1104.70" cy="323.50" r="11.2" fill="url(#kg)"/>
<line x1="1101.96" y1="328.95" x2="1098.34" y2="332.96" stroke="#1e1e1e" stroke-width="1.9" stroke-linecap="round"/>
<path d="M1149.84 338.90A16.5 16.5 0 1 1 1170.16 338.90" fill="none" stroke="#ffffff" stroke-width="4.6" stroke-linecap="butt" opacity="0.09"/>
<path d="M1148.09 341.15A19.35 19.35 0 1 1 1171.91 341.15" fill="none" stroke="#6a6a6a" stroke-width="0.7" stroke-linecap="butt" opacity="0.16"/>
<path d="M1148.55 340.56A18.6 18.6 0 1 1 1171.45 340.56" fill="none" stroke="#ffffff" stroke-width="0.9" stroke-linecap="butt" opacity="0.3"/>
<path d="M1151.32 337.01A14.1 14.1 0 1 1 1168.68 337.01" fill="none" stroke="#606060" stroke-width="0.8" stroke-linecap="butt" opacity="0.13"/>
<circle cx="1160.00" cy="327.90" r="11.7" fill="#2a2a2a" opacity="0.84" filter="url(#bl)"/>
<circle cx="1160.00" cy="323.50" r="11.2" fill="url(#kg)"/>
<line x1="1157.26" y1="328.95" x2="1153.64" y2="332.96" stroke="#1e1e1e" stroke-width="1.9" stroke-linecap="round"/>
<text x="1086.80" y="357.80" font-size="12.6" fill="#2a2a2a" textLength="36.40" lengthAdjust="spacingAndGlyphs" stroke="#2a2a2a" stroke-width="0.3">Send 1</text>
<text x="1141.60" y="357.80" font-size="12.6" fill="#2a2a2a" textLength="36.80" lengthAdjust="spacingAndGlyphs" stroke="#2a2a2a" stroke-width="0.3">Send 2</text>
<rect x="2.40" y="369.40" width="596.30" height="83.20" rx="2.5" fill="url(#pg2)"/>
<rect x="17.20" y="383.40" width="31.00" height="21.40" rx="2.5" fill="#f05252" stroke="#c94a4a" stroke-width="0.8"/>
<rect x="55.60" y="383.30" width="78.80" height="20.70" rx="0" fill="#d3d3d3"/>
<rect x="55.60" y="403.80" width="78.80" height="1.15" rx="0" fill="#484848"/>
<text x="70.50" y="398.33" font-size="13" fill="#2e2e2e" textLength="49.00" lengthAdjust="spacingAndGlyphs" stroke="#2e2e2e" stroke-width="0.3">Retrigger</text>
<rect x="55.60" y="415.80" width="78.80" height="20.70" rx="0" fill="#d3d3d3"/>
<rect x="55.60" y="436.30" width="78.80" height="1.15" rx="0" fill="#484848"/>
<text x="70.25" y="430.83" font-size="13" fill="#2e2e2e" textLength="49.50" lengthAdjust="spacingAndGlyphs" stroke="#2e2e2e" stroke-width="0.3">One Shot</text>
<rect x="143.00" y="383.60" width="29.40" height="20.60" rx="2.5" fill="#dcdcdc" stroke="#777" stroke-width="1"/>
<text x="152.80" y="398.80" font-size="14" font-weight="bold" fill="#333" textLength="9.80" lengthAdjust="spacingAndGlyphs">M</text>
<rect x="143.00" y="416.40" width="29.40" height="20.60" rx="2.5" fill="#dcdcdc" stroke="#777" stroke-width="1"/>
<text x="153.90" y="431.60" font-size="14" font-weight="bold" fill="#333" textLength="7.60" lengthAdjust="spacingAndGlyphs">S</text>
<path d="M19.8 427.5L21 421Q22 416.6 23 421L24.2 427.5L25 432.4Q26 437 27 432.4L28.2 427.5L29.3 423.4Q30.3 419.8 31.3 423.4L32.5 427.5L33.5 430.4Q34.5 433.4 35.5 430.4L36.6 427.5L37.6 425.4Q38.6 422.8 39.6 425.4L40.8 427.5Q43 427 44.8 428.4Q43 430.6 41.2 428.8Z" fill="#2e2e2e"/>
<path d="M213.62 421.89A22.7 22.7 0 1 1 241.58 421.89" fill="none" stroke="#ffffff" stroke-width="5.6" stroke-linecap="butt" opacity="0.09"/>
<path d="M211.56 424.53A26.05 26.05 0 1 1 243.64 424.53" fill="none" stroke="#6a6a6a" stroke-width="0.7" stroke-linecap="butt" opacity="0.16"/>
<path d="M212.02 423.94A25.3 25.3 0 1 1 243.18 423.94" fill="none" stroke="#ffffff" stroke-width="0.9" stroke-linecap="butt" opacity="0.3"/>
<path d="M215.41 419.60A19.799999999999997 19.799999999999997 0 1 1 239.79 419.60" fill="none" stroke="#606060" stroke-width="0.8" stroke-linecap="butt" opacity="0.13"/>
<path d="M213.62 421.89A22.7 22.7 0 1 1 244.32 388.64" fill="none" stroke="#f05050" stroke-width="5.6" stroke-linecap="butt"/>
<circle cx="227.60" cy="406.70" r="15.3" fill="#2a2a2a" opacity="0.84" filter="url(#bl)"/>
<circle cx="227.60" cy="401.10" r="14.8" fill="url(#kg)"/>
<line x1="232.13" y1="400.06" x2="237.26" y2="395.60" stroke="#1e1e1e" stroke-width="2.2" stroke-linecap="round"/>
<path d="M286.22 421.89A22.7 22.7 0 1 1 314.18 421.89" fill="none" stroke="#ffffff" stroke-width="5.6" stroke-linecap="butt" opacity="0.09"/>
<path d="M284.16 424.53A26.05 26.05 0 1 1 316.24 424.53" fill="none" stroke="#6a6a6a" stroke-width="0.7" stroke-linecap="butt" opacity="0.16"/>
<path d="M284.62 423.94A25.3 25.3 0 1 1 315.78 423.94" fill="none" stroke="#ffffff" stroke-width="0.9" stroke-linecap="butt" opacity="0.3"/>
<path d="M288.01 419.60A19.799999999999997 19.799999999999997 0 1 1 312.39 419.60" fill="none" stroke="#606060" stroke-width="0.8" stroke-linecap="butt" opacity="0.13"/>
<circle cx="300.20" cy="406.70" r="15.3" fill="#2a2a2a" opacity="0.84" filter="url(#bl)"/>
<circle cx="300.20" cy="401.10" r="14.8" fill="url(#kg)"/>
<line x1="300.20" y1="398.00" x2="300.20" y2="391.20" stroke="#1e1e1e" stroke-width="2.2" stroke-linecap="round"/>
<path d="M358.62 421.89A22.7 22.7 0 1 1 386.58 421.89" fill="none" stroke="#ffffff" stroke-width="5.6" stroke-linecap="butt" opacity="0.09"/>
<path d="M356.56 424.53A26.05 26.05 0 1 1 388.64 424.53" fill="none" stroke="#6a6a6a" stroke-width="0.7" stroke-linecap="butt" opacity="0.16"/>
<path d="M357.02 423.94A25.3 25.3 0 1 1 388.18 423.94" fill="none" stroke="#ffffff" stroke-width="0.9" stroke-linecap="butt" opacity="0.3"/>
<path d="M360.41 419.60A19.799999999999997 19.799999999999997 0 1 1 384.79 419.60" fill="none" stroke="#606060" stroke-width="0.8" stroke-linecap="butt" opacity="0.13"/>
<circle cx="372.60" cy="406.70" r="15.3" fill="#2a2a2a" opacity="0.84" filter="url(#bl)"/>
<circle cx="372.60" cy="401.10" r="14.8" fill="url(#kg)"/>
<line x1="372.60" y1="398.00" x2="372.60" y2="391.20" stroke="#1e1e1e" stroke-width="2.2" stroke-linecap="round"/>
<text x="207.50" y="442.40" font-size="13" fill="#2e2e2e" textLength="40.60" lengthAdjust="spacingAndGlyphs">Volume</text>
<text x="289.24" y="442.40" font-size="13" fill="#2e2e2e" textLength="21.51" lengthAdjust="spacingAndGlyphs">Pan</text>
<text x="359.06" y="442.40" font-size="13" fill="#2e2e2e" textLength="26.88" lengthAdjust="spacingAndGlyphs">Pitch</text>
<rect x="427.60" y="383.30" width="62.40" height="20.70" rx="0" fill="#d3d3d3"/>
<rect x="427.60" y="403.80" width="62.40" height="1.15" rx="0" fill="#484848"/>
<text x="443.69" y="398.33" font-size="13" fill="#2e2e2e" textLength="30.22" lengthAdjust="spacingAndGlyphs" stroke="#2e2e2e" stroke-width="0.3">Cut --</text>
<rect x="497.60" y="383.30" width="85.80" height="20.70" rx="0" fill="#d3d3d3"/>
<rect x="497.60" y="403.80" width="85.80" height="1.15" rx="0" fill="#484848"/>
<text x="515.87" y="398.33" font-size="13" fill="#2e2e2e" textLength="49.25" lengthAdjust="spacingAndGlyphs" stroke="#2e2e2e" stroke-width="0.3">Trigger --</text>
<rect x="427.60" y="415.80" width="62.40" height="20.70" rx="0" fill="#d3d3d3"/>
<rect x="427.60" y="436.30" width="62.40" height="1.15" rx="0" fill="#484848"/>
<text x="436.63" y="430.83" font-size="13" fill="#2e2e2e" textLength="44.33" lengthAdjust="spacingAndGlyphs" stroke="#2e2e2e" stroke-width="0.3">CutBy --</text>
<rect x="497.60" y="415.80" width="85.80" height="20.70" rx="0" fill="#d3d3d3"/>
<rect x="497.60" y="436.30" width="85.80" height="1.15" rx="0" fill="#484848"/>
<text x="522.03" y="430.83" font-size="13" fill="#2e2e2e" textLength="36.95" lengthAdjust="spacingAndGlyphs" stroke="#2e2e2e" stroke-width="0.3">Master</text>
<rect x="601.50" y="369.40" width="267.10" height="83.20" rx="2.5" fill="url(#pg2)"/>
<linearGradient id="hl" x1="0" y1="0" x2="1" y2="0"><stop offset="0" stop-color="#cfcfcf" stop-opacity="0"/><stop offset="0.5" stop-color="#cfcfcf" stop-opacity="0.75"/><stop offset="1" stop-color="#cfcfcf" stop-opacity="0"/></linearGradient>
<rect x="735.00" y="371.00" width="117.00" height="18.00" rx="0" fill="url(#hl)"/>
<rect x="604.30" y="372.40" width="14.60" height="14.60" rx="1.5" fill="#f05050"/>
<text x="629.40" y="384.30" font-size="12.6" fill="#2e2e2e" textLength="73.00" lengthAdjust="spacingAndGlyphs">VOLUME ENV</text>
<text x="778.00" y="384.30" font-size="12.6" fill="#9a9a9a" textLength="62.40" lengthAdjust="spacingAndGlyphs">FILTER ENV</text>
<rect x="852.10" y="373.30" width="13.00" height="13.00" rx="2" fill="#d3d3d3" stroke="#787878" stroke-width="1"/>
<path d="M643.64 423.70A16.5 16.5 0 1 1 663.96 423.70" fill="none" stroke="#ffffff" stroke-width="4.6" stroke-linecap="butt" opacity="0.09"/>
<path d="M641.89 425.95A19.35 19.35 0 1 1 665.71 425.95" fill="none" stroke="#6a6a6a" stroke-width="0.7" stroke-linecap="butt" opacity="0.16"/>
<path d="M642.35 425.36A18.6 18.6 0 1 1 665.25 425.36" fill="none" stroke="#ffffff" stroke-width="0.9" stroke-linecap="butt" opacity="0.3"/>
<path d="M645.12 421.81A14.1 14.1 0 1 1 662.48 421.81" fill="none" stroke="#606060" stroke-width="0.8" stroke-linecap="butt" opacity="0.13"/>
<circle cx="653.80" cy="412.70" r="11.7" fill="#2a2a2a" opacity="0.84" filter="url(#bl)"/>
<circle cx="653.80" cy="408.30" r="11.2" fill="url(#kg)"/>
<line x1="651.16" y1="413.84" x2="647.69" y2="417.98" stroke="#1e1e1e" stroke-width="1.9" stroke-linecap="round"/>
<path d="M698.04 423.70A16.5 16.5 0 1 1 718.36 423.70" fill="none" stroke="#ffffff" stroke-width="4.6" stroke-linecap="butt" opacity="0.09"/>
<path d="M696.29 425.95A19.35 19.35 0 1 1 720.11 425.95" fill="none" stroke="#6a6a6a" stroke-width="0.7" stroke-linecap="butt" opacity="0.16"/>
<path d="M696.75 425.36A18.6 18.6 0 1 1 719.65 425.36" fill="none" stroke="#ffffff" stroke-width="0.9" stroke-linecap="butt" opacity="0.3"/>
<path d="M699.52 421.81A14.1 14.1 0 1 1 716.88 421.81" fill="none" stroke="#606060" stroke-width="0.8" stroke-linecap="butt" opacity="0.13"/>
<path d="M698.04 423.70A16.5 16.5 0 1 1 718.36 423.70" fill="none" stroke="#f05050" stroke-width="4.6" stroke-linecap="butt"/>
<circle cx="708.20" cy="412.70" r="11.7" fill="#2a2a2a" opacity="0.84" filter="url(#bl)"/>
<circle cx="708.20" cy="408.30" r="11.2" fill="url(#kg)"/>
<line x1="710.72" y1="413.93" x2="714.05" y2="418.19" stroke="#1e1e1e" stroke-width="1.9" stroke-linecap="round"/>
<path d="M751.84 423.70A16.5 16.5 0 1 1 772.16 423.70" fill="none" stroke="#ffffff" stroke-width="4.6" stroke-linecap="butt" opacity="0.09"/>
<path d="M750.09 425.95A19.35 19.35 0 1 1 773.91 425.95" fill="none" stroke="#6a6a6a" stroke-width="0.7" stroke-linecap="butt" opacity="0.16"/>
<path d="M750.55 425.36A18.6 18.6 0 1 1 773.45 425.36" fill="none" stroke="#ffffff" stroke-width="0.9" stroke-linecap="butt" opacity="0.3"/>
<path d="M753.32 421.81A14.1 14.1 0 1 1 770.68 421.81" fill="none" stroke="#606060" stroke-width="0.8" stroke-linecap="butt" opacity="0.13"/>
<path d="M751.84 423.70A16.5 16.5 0 0 1 745.78 407.70" fill="none" stroke="#f05050" stroke-width="4.6" stroke-linecap="butt"/>
<circle cx="762.00" cy="412.70" r="11.7" fill="#2a2a2a" opacity="0.84" filter="url(#bl)"/>
<circle cx="762.00" cy="408.30" r="11.2" fill="url(#kg)"/>
<line x1="757.96" y1="409.99" x2="752.64" y2="409.05" stroke="#1e1e1e" stroke-width="1.9" stroke-linecap="round"/>
<path d="M805.34 423.70A16.5 16.5 0 1 1 825.66 423.70" fill="none" stroke="#ffffff" stroke-width="4.6" stroke-linecap="butt" opacity="0.09"/>
<path d="M803.59 425.95A19.35 19.35 0 1 1 827.41 425.95" fill="none" stroke="#6a6a6a" stroke-width="0.7" stroke-linecap="butt" opacity="0.16"/>
<path d="M804.05 425.36A18.6 18.6 0 1 1 826.95 425.36" fill="none" stroke="#ffffff" stroke-width="0.9" stroke-linecap="butt" opacity="0.3"/>
<path d="M806.82 421.81A14.1 14.1 0 1 1 824.18 421.81" fill="none" stroke="#606060" stroke-width="0.8" stroke-linecap="butt" opacity="0.13"/>
<circle cx="815.50" cy="412.70" r="11.7" fill="#2a2a2a" opacity="0.84" filter="url(#bl)"/>
<circle cx="815.50" cy="408.30" r="11.2" fill="url(#kg)"/>
<text x="636.70" y="443.30" font-size="12.6" fill="#2a2a2a" textLength="34.60" lengthAdjust="spacingAndGlyphs" stroke="#2a2a2a" stroke-width="0.3">Attack</text>
<text x="696.15" y="443.30" font-size="12.6" fill="#2a2a2a" textLength="24.10" lengthAdjust="spacingAndGlyphs" stroke="#2a2a2a" stroke-width="0.3">Hold</text>
<text x="745.75" y="443.30" font-size="12.6" fill="#2a2a2a" textLength="32.50" lengthAdjust="spacingAndGlyphs" stroke="#2a2a2a" stroke-width="0.3">Decay</text>
<text x="794.00" y="443.30" font-size="12.6" fill="#828282" textLength="42.99" lengthAdjust="spacingAndGlyphs" stroke="#828282" stroke-width="0.3">Release</text>
<rect x="871.30" y="369.40" width="326.50" height="83.20" rx="2.5" fill="url(#pg2)"/>
<rect x="875.30" y="373.30" width="13.00" height="13.00" rx="2" fill="#d3d3d3" stroke="#787878" stroke-width="1"/>
<text x="878.19" y="410.20" font-size="12.2" fill="#2a2a2a" textLength="16.22" lengthAdjust="spacingAndGlyphs" transform="rotate(-90 886.30 410.20)" stroke="#2a2a2a" stroke-width="0.45">EQ</text>
<line x1="876.4" y1="433.5" x2="887.2" y2="433.5" stroke="#444" stroke-width="1.7" stroke-linecap="round"/>
<line x1="876.4" y1="437.9" x2="887.2" y2="437.9" stroke="#444" stroke-width="1.7" stroke-linecap="round"/>
<line x1="876.4" y1="442.3" x2="887.2" y2="442.3" stroke="#444" stroke-width="1.7" stroke-linecap="round"/>
<rect x="892.00" y="372.40" width="288.30" height="77.30" rx="1" fill="#e9e9e9"/>
<rect x="1183.00" y="372.40" width="12.00" height="77.30" rx="0" fill="#dedede"/>
<rect x="1184.30" y="406.00" width="3.90" height="43.70" rx="0" fill="#f05050"/>
<rect x="1189.60" y="406.00" width="4.00" height="43.70" rx="0" fill="#f05050"/>
<rect x="1184.30" y="380.40" width="3.00" height="1.40" rx="0" fill="#f05050"/>
<rect x="1190.40" y="380.40" width="3.00" height="1.40" rx="0" fill="#f05050"/>
<path d="M983.8 449.4L983.8 449.4L985.0 444.2L986.3 439.4L987.5 435.2L988.8 431.4L990.0 429.7L991.2 428.8L992.4 428.6L993.6 428.8L994.8 429.0L996.0 426.6L997.2 424.5L998.3 422.1L999.5 420.7L1000.6 418.6L1001.8 416.3L1002.9 416.0L1004.1 414.9L1005.2 414.1L1006.3 413.9L1007.5 413.5L1008.6 413.3L1009.7 412.7L1010.8 408.4L1011.9 402.0L1013.0 403.0L1014.0 408.4L1015.1 413.1L1016.2 413.8L1017.2 415.9L1018.3 415.2L1019.3 416.2L1020.4 416.1L1021.4 417.2L1022.4 416.7L1023.5 416.4L1024.5 419.7L1025.5 420.0L1026.5 419.8L1027.5 419.6L1028.5 418.4L1029.5 418.4L1030.5 418.9L1031.4 418.4L1032.4 421.4L1033.4 420.3L1034.3 422.4L1035.3 420.8L1036.2 423.4L1037.2 423.1L1038.1 419.9L1039.1 420.9L1040.0 423.9L1040.9 422.4L1041.8 422.5L1042.7 418.1L1043.6 414.6L1044.5 414.3L1045.4 414.8L1046.3 415.2L1047.2 416.5L1048.1 418.3L1049.0 421.7L1049.8 421.6L1050.7 418.8L1051.5 419.5L1052.4 418.1L1053.2 417.5L1054.1 422.1L1054.9 417.6L1055.8 419.8L1056.6 418.7L1057.4 416.6L1058.2 420.0L1059.0 415.7L1059.9 418.9L1060.7 415.1L1061.5 417.0L1062.3 415.3L1063.1 415.5L1063.8 420.0L1064.6 418.6L1065.4 415.0L1066.2 418.7L1066.9 413.9L1067.7 415.0L1068.5 417.9L1069.2 416.2L1070.0 412.3L1070.7 418.2L1071.5 412.9L1072.2 413.1L1072.9 416.5L1073.6 413.4L1074.4 413.0L1075.1 411.4L1075.8 411.4L1076.5 414.7L1077.2 412.3L1077.9 414.6L1078.6 413.0L1079.3 413.4L1080.0 418.6L1080.7 413.4L1081.4 414.3L1082.1 417.4L1082.7 409.9L1083.4 409.5L1084.1 417.5L1084.7 416.5L1085.4 410.3L1086.1 409.6L1086.7 415.5L1087.4 417.7L1088.0 409.5L1088.6 417.7L1089.3 417.0L1089.9 413.9L1090.5 411.9L1091.2 408.3L1091.8 407.6L1092.4 417.7L1093.0 409.7L1093.6 414.8L1094.2 409.9L1094.8 416.1L1095.4 413.5L1096.0 410.2L1096.6 408.8L1097.2 414.8L1097.8 407.6L1098.4 409.3L1099.0 412.9L1099.5 416.2L1100.1 413.5L1100.7 409.8L1101.2 416.8L1101.8 408.8L1102.4 406.7L1102.9 409.5L1103.5 411.5L1104.0 407.1L1104.6 408.4L1105.1 410.5L1105.7 412.8L1106.2 407.9L1106.7 410.5L1107.3 416.5L1107.8 417.5L1108.3 413.9L1108.8 414.3L1109.4 413.1L1109.9 408.1L1110.4 406.9L1110.9 406.7L1111.4 416.8L1111.9 414.5L1112.4 417.5L1112.9 406.8L1113.4 413.8L1113.9 412.1L1114.4 414.9L1114.9 410.2L1115.3 418.0L1115.8 407.5L1116.3 412.9L1116.8 415.0L1117.2 416.9L1117.7 415.1L1118.2 414.7L1118.6 415.7L1119.1 417.1L1119.6 410.7L1120.0 414.6L1120.5 417.0L1120.9 416.7L1121.4 411.5L1121.8 415.8L1122.3 416.7L1122.7 413.4L1123.1 414.1L1123.6 411.4L1124.0 413.7L1124.4 414.1L1124.9 408.0L1125.3 414.5L1125.7 418.7L1126.1 417.4L1126.5 415.7L1127.0 411.9L1127.4 415.9L1127.8 414.2L1128.2 412.6L1128.6 417.3L1129.0 408.6L1129.4 416.4L1129.8 408.1L1130.2 414.7L1130.6 413.4L1131.0 410.5L1131.4 416.0L1131.7 413.7L1132.1 415.2L1132.5 418.8L1132.9 411.1L1133.3 408.3L1133.6 411.7L1134.0 416.1L1134.4 410.7L1134.8 410.3L1135.1 418.9L1135.5 416.1L1135.8 413.6L1136.2 418.9L1136.6 412.4L1136.9 416.4L1137.3 411.0L1137.6 413.9L1138.0 418.4L1138.3 419.9L1138.7 419.7L1139.0 414.0L1139.4 416.5L1139.7 413.6L1140.0 411.6L1140.4 416.0L1140.7 420.2L1141.0 420.5L1141.4 419.1L1141.7 422.1L1142.0 414.3L1142.3 413.2L1142.7 416.7L1143.0 414.8L1143.3 414.2L1143.6 416.8L1143.9 419.4L1144.2 418.0L1144.6 416.1L1144.9 422.4L1145.2 424.3L1145.5 418.2L1145.8 413.9L1146.1 413.5L1146.4 423.7L1146.7 414.1L1147.0 422.2L1147.3 420.8L1147.6 417.9L1147.9 423.8L1148.2 414.9L1148.4 416.5L1148.7 420.5L1149.0 415.6L1149.3 425.4L1149.6 418.5L1149.9 417.6L1150.1 416.7L1150.4 423.8L1150.7 421.9L1151.0 424.2L1151.2 424.8L1151.5 426.8L1151.8 428.8L1152.0 425.7L1152.3 420.1L1152.6 423.6L1152.8 420.2L1153.1 418.4L1153.3 424.0L1153.6 427.0L1153.9 420.8L1154.1 422.0L1154.4 423.0L1154.6 427.4L1154.9 425.4L1155.1 426.7L1155.4 428.5L1155.6 424.3L1155.9 429.2L1156.1 430.7L1156.3 421.0L1156.6 431.3L1156.8 428.9L1157.1 421.9L1157.3 425.9L1157.5 428.1L1157.8 431.7L1158.0 425.4L1158.2 427.8L1158.5 431.7L1158.7 430.8L1158.9 432.7L1159.1 427.0L1159.4 429.4L1159.6 424.1L1159.8 430.5L1160.0 431.8L1160.2 429.8L1160.5 430.8L1160.7 424.8L1160.9 433.2L1161.1 434.3L1161.3 434.4L1161.6 429.2L1161.8 432.4L1162.0 426.8L1162.2 434.1L1162.4 433.5L1162.7 427.5L1162.9 424.4L1163.1 428.8L1163.3 430.3L1163.5 433.0L1163.8 429.7L1164.0 424.3L1164.2 433.9L1164.4 424.9L1164.6 434.0L1164.9 426.5L1165.1 428.5L1165.3 434.2L1165.5 426.4L1165.7 426.6L1166.0 431.2L1166.2 433.8L1166.4 435.3L1166.6 433.6L1166.8 436.8L1167.1 431.4L1167.3 437.1L1167.5 426.7L1167.7 428.5L1167.9 432.3L1168.2 429.5L1168.4 435.0L1168.6 434.0L1168.8 432.7L1169.0 436.7L1169.3 433.4L1169.5 430.4L1169.7 431.4L1169.9 437.2L1170.1 438.0L1170.4 429.6L1170.6 437.6L1170.8 439.1L1171.0 433.8L1171.2 434.5L1171.5 430.1L1171.7 434.3L1171.9 434.0L1172.1 435.4L1172.3 428.6L1172.6 440.3L1172.8 435.0L1173.0 433.8L1173.2 439.0L1173.4 436.3L1173.7 435.6L1173.9 438.3L1174.1 430.9L1174.3 436.9L1174.5 435.6L1174.8 442.5L1175.0 442.3L1175.2 434.5L1175.4 437.2L1175.6 433.2L1175.9 437.2L1176.1 442.2L1176.3 443.4L1176.5 438.4L1176.7 436.7L1177.0 435.4L1177.2 440.9L1177.4 444.9L1177.6 435.3L1177.8 443.6L1178.1 434.4L1178.3 436.8L1178.5 437.4L1178.7 443.4L1178.9 439.5L1179.2 440.6L1179.4 444.6L1179.6 438.9L1179.8 447.4L1180.0 440.5L1180.3 446.0L1180.3 449.5L1180.3 449.7L983.8 449.7Z" fill="#f1cfcf"/>
<rect x="892.00" y="449.00" width="92.00" height="0.70" rx="0" fill="#f0a0a0"/>
<path d="M983.8 449.4L983.8 449.4L985.0 444.2L986.3 439.4L987.5 435.2L988.8 431.4L990.0 429.7L991.2 428.8L992.4 428.6L993.6 428.8L994.8 429.0L996.0 426.6L997.2 424.5L998.3 422.1L999.5 420.7L1000.6 418.6L1001.8 416.3L1002.9 416.0L1004.1 414.9L1005.2 414.1L1006.3 413.9L1007.5 413.5L1008.6 413.3L1009.7 412.7L1010.8 408.4L1011.9 402.0L1013.0 403.0L1014.0 408.4L1015.1 413.1L1016.2 413.8L1017.2 415.9L1018.3 415.2L1019.3 416.2L1020.4 416.1L1021.4 417.2L1022.4 416.7L1023.5 416.4L1024.5 419.7L1025.5 420.0L1026.5 419.8L1027.5 419.6L1028.5 418.4L1029.5 418.4L1030.5 418.9L1031.4 418.4L1032.4 421.4L1033.4 420.3L1034.3 422.4L1035.3 420.8L1036.2 423.4L1037.2 423.1L1038.1 419.9L1039.1 420.9L1040.0 423.9L1040.9 422.4L1041.8 422.5L1042.7 418.1L1043.6 414.6L1044.5 414.3L1045.4 414.8L1046.3 415.2L1047.2 416.5L1048.1 418.3L1049.0 421.7L1049.8 421.6L1050.7 418.8L1051.5 419.5L1052.4 418.1L1053.2 417.5L1054.1 422.1L1054.9 417.6L1055.8 419.8L1056.6 418.7L1057.4 416.6L1058.2 420.0L1059.0 415.7L1059.9 418.9L1060.7 415.1L1061.5 417.0L1062.3 415.3L1063.1 415.5L1063.8 420.0L1064.6 418.6L1065.4 415.0L1066.2 418.7L1066.9 413.9L1067.7 415.0L1068.5 417.9L1069.2 416.2L1070.0 412.3L1070.7 418.2L1071.5 412.9L1072.2 413.1L1072.9 416.5L1073.6 413.4L1074.4 413.0L1075.1 411.4L1075.8 411.4L1076.5 414.7L1077.2 412.3L1077.9 414.6L1078.6 413.0L1079.3 413.4L1080.0 418.6L1080.7 413.4L1081.4 414.3L1082.1 417.4L1082.7 409.9L1083.4 409.5L1084.1 417.5L1084.7 416.5L1085.4 410.3L1086.1 409.6L1086.7 415.5L1087.4 417.7L1088.0 409.5L1088.6 417.7L1089.3 417.0L1089.9 413.9L1090.5 411.9L1091.2 408.3L1091.8 407.6L1092.4 417.7L1093.0 409.7L1093.6 414.8L1094.2 409.9L1094.8 416.1L1095.4 413.5L1096.0 410.2L1096.6 408.8L1097.2 414.8L1097.8 407.6L1098.4 409.3L1099.0 412.9L1099.5 416.2L1100.1 413.5L1100.7 409.8L1101.2 416.8L1101.8 408.8L1102.4 406.7L1102.9 409.5L1103.5 411.5L1104.0 407.1L1104.6 408.4L1105.1 410.5L1105.7 412.8L1106.2 407.9L1106.7 410.5L1107.3 416.5L1107.8 417.5L1108.3 413.9L1108.8 414.3L1109.4 413.1L1109.9 408.1L1110.4 406.9L1110.9 406.7L1111.4 416.8L1111.9 414.5L1112.4 417.5L1112.9 406.8L1113.4 413.8L1113.9 412.1L1114.4 414.9L1114.9 410.2L1115.3 418.0L1115.8 407.5L1116.3 412.9L1116.8 415.0L1117.2 416.9L1117.7 415.1L1118.2 414.7L1118.6 415.7L1119.1 417.1L1119.6 410.7L1120.0 414.6L1120.5 417.0L1120.9 416.7L1121.4 411.5L1121.8 415.8L1122.3 416.7L1122.7 413.4L1123.1 414.1L1123.6 411.4L1124.0 413.7L1124.4 414.1L1124.9 408.0L1125.3 414.5L1125.7 418.7L1126.1 417.4L1126.5 415.7L1127.0 411.9L1127.4 415.9L1127.8 414.2L1128.2 412.6L1128.6 417.3L1129.0 408.6L1129.4 416.4L1129.8 408.1L1130.2 414.7L1130.6 413.4L1131.0 410.5L1131.4 416.0L1131.7 413.7L1132.1 415.2L1132.5 418.8L1132.9 411.1L1133.3 408.3L1133.6 411.7L1134.0 416.1L1134.4 410.7L1134.8 410.3L1135.1 418.9L1135.5 416.1L1135.8 413.6L1136.2 418.9L1136.6 412.4L1136.9 416.4L1137.3 411.0L1137.6 413.9L1138.0 418.4L1138.3 419.9L1138.7 419.7L1139.0 414.0L1139.4 416.5L1139.7 413.6L1140.0 411.6L1140.4 416.0L1140.7 420.2L1141.0 420.5L1141.4 419.1L1141.7 422.1L1142.0 414.3L1142.3 413.2L1142.7 416.7L1143.0 414.8L1143.3 414.2L1143.6 416.8L1143.9 419.4L1144.2 418.0L1144.6 416.1L1144.9 422.4L1145.2 424.3L1145.5 418.2L1145.8 413.9L1146.1 413.5L1146.4 423.7L1146.7 414.1L1147.0 422.2L1147.3 420.8L1147.6 417.9L1147.9 423.8L1148.2 414.9L1148.4 416.5L1148.7 420.5L1149.0 415.6L1149.3 425.4L1149.6 418.5L1149.9 417.6L1150.1 416.7L1150.4 423.8L1150.7 421.9L1151.0 424.2L1151.2 424.8L1151.5 426.8L1151.8 428.8L1152.0 425.7L1152.3 420.1L1152.6 423.6L1152.8 420.2L1153.1 418.4L1153.3 424.0L1153.6 427.0L1153.9 420.8L1154.1 422.0L1154.4 423.0L1154.6 427.4L1154.9 425.4L1155.1 426.7L1155.4 428.5L1155.6 424.3L1155.9 429.2L1156.1 430.7L1156.3 421.0L1156.6 431.3L1156.8 428.9L1157.1 421.9L1157.3 425.9L1157.5 428.1L1157.8 431.7L1158.0 425.4L1158.2 427.8L1158.5 431.7L1158.7 430.8L1158.9 432.7L1159.1 427.0L1159.4 429.4L1159.6 424.1L1159.8 430.5L1160.0 431.8L1160.2 429.8L1160.5 430.8L1160.7 424.8L1160.9 433.2L1161.1 434.3L1161.3 434.4L1161.6 429.2L1161.8 432.4L1162.0 426.8L1162.2 434.1L1162.4 433.5L1162.7 427.5L1162.9 424.4L1163.1 428.8L1163.3 430.3L1163.5 433.0L1163.8 429.7L1164.0 424.3L1164.2 433.9L1164.4 424.9L1164.6 434.0L1164.9 426.5L1165.1 428.5L1165.3 434.2L1165.5 426.4L1165.7 426.6L1166.0 431.2L1166.2 433.8L1166.4 435.3L1166.6 433.6L1166.8 436.8L1167.1 431.4L1167.3 437.1L1167.5 426.7L1167.7 428.5L1167.9 432.3L1168.2 429.5L1168.4 435.0L1168.6 434.0L1168.8 432.7L1169.0 436.7L1169.3 433.4L1169.5 430.4L1169.7 431.4L1169.9 437.2L1170.1 438.0L1170.4 429.6L1170.6 437.6L1170.8 439.1L1171.0 433.8L1171.2 434.5L1171.5 430.1L1171.7 434.3L1171.9 434.0L1172.1 435.4L1172.3 428.6L1172.6 440.3L1172.8 435.0L1173.0 433.8L1173.2 439.0L1173.4 436.3L1173.7 435.6L1173.9 438.3L1174.1 430.9L1174.3 436.9L1174.5 435.6L1174.8 442.5L1175.0 442.3L1175.2 434.5L1175.4 437.2L1175.6 433.2L1175.9 437.2L1176.1 442.2L1176.3 443.4L1176.5 438.4L1176.7 436.7L1177.0 435.4L1177.2 440.9L1177.4 444.9L1177.6 435.3L1177.8 443.6L1178.1 434.4L1178.3 436.8L1178.5 437.4L1178.7 443.4L1178.9 439.5L1179.2 440.6L1179.4 444.6L1179.6 438.9L1179.8 447.4L1180.0 440.5L1180.3 446.0L1180.3 449.5" fill="none" stroke="#ee5353" stroke-width="1.2" stroke-linejoin="round"/>
<rect x="2.00" y="455.40" width="35.00" height="264.60" rx="0" fill="#c9c9c9"/>
<rect x="5.00" y="463.00" width="30.00" height="24.00" rx="2" fill="#1657a5"/>
<rect x="12.60" y="467.60" width="6.40" height="14.40" rx="1" fill="#fff"/>
<rect x="21.40" y="467.60" width="6.40" height="14.40" rx="1" fill="#fff"/>
<rect x="12.00" y="492.00" width="2.50" height="14.60" rx="0" fill="#333"/>
<rect x="16.50" y="492.00" width="2.50" height="14.60" rx="0" fill="#333"/>
<rect x="21.00" y="492.00" width="2.50" height="14.60" rx="0" fill="#333"/>
<rect x="25.50" y="492.00" width="2.50" height="14.60" rx="0" fill="#333"/>
<rect x="5.00" y="534.00" width="30.00" height="24.00" rx="2" fill="#1657a5"/>
<path d="M13.6 544.8a6.6 6.6 0 0 1 11 -3.4l1.8 -1.8v5.6h-5.6l2 -2a4 4 0 0 0 -6.6 1.6z" fill="#fff"/>
<path d="M26.4 547.2a6.6 6.6 0 0 1 -11 3.4l-1.8 1.8v-5.6h5.6l-2 2a4 4 0 0 0 6.6 -1.6z" fill="#fff"/>
<rect x="5.00" y="564.00" width="30.00" height="24.00" rx="2" fill="#1657a5"/>
<text x="8.40" y="581.70" font-size="15.4" font-weight="bold" fill="#fff" textLength="23.20" lengthAdjust="spacingAndGlyphs" stroke="#fff" stroke-width="0.4">BUS</text>
<clipPath id="mc"><rect x="40" y="455.4" width="751" height="266"/></clipPath>
<g clip-path="url(#mc)">
<rect x="40.00" y="455.40" width="72.30" height="256.80" rx="0" fill="#bcb5dc"/>
<text x="72.66" y="475.00" font-size="12" fill="#222" textLength="6.67" lengthAdjust="spacingAndGlyphs" stroke="#222" stroke-width="0.3">1</text>
<path d="M67.38 507.53A14 14 0 1 1 84.62 507.53" fill="none" stroke="#b0a9cd" stroke-width="3.4" stroke-linecap="butt"/>
<text x="56.00" y="534.60" font-size="12" fill="#333" textLength="9.20" lengthAdjust="spacingAndGlyphs" stroke="#333" stroke-width="0.5">M</text>
<text x="56.92" y="556.20" font-size="12" fill="#333" textLength="7.36" lengthAdjust="spacingAndGlyphs" stroke="#333" stroke-width="0.5">S</text>
<rect x="77.00" y="519.00" width="11.00" height="160.60" rx="0" fill="#e4e3e9"/>
<rect x="93.60" y="520.00" width="5.80" height="57.60" rx="0" fill="#d8d4ea"/>
<rect x="93.60" y="577.40" width="5.80" height="101.60" rx="0" fill="#7f5ff2"/>
<rect x="92.20" y="566.20" width="8.60" height="11.20" rx="0" fill="#d0cbe6"/>
<rect x="92.80" y="566.90" width="7.50" height="3.00" rx="0" fill="#8e8e8a"/>
<rect x="91.60" y="571.30" width="10.00" height="1.70" rx="0" fill="#65599e"/>
<rect x="92.80" y="574.20" width="7.50" height="2.50" rx="0" fill="#8e8e8a"/>
<text x="65.80" y="675.40" font-size="13" fill="#1c1c1c" textLength="56.89" lengthAdjust="spacingAndGlyphs" transform="rotate(-90 65.80 675.40)" stroke="#1c1c1c" stroke-width="0.45">Bass Drum</text>
<rect x="46.80" y="686.00" width="58.20" height="19.80" rx="0" fill="#d8d4e8"/>
<rect x="46.80" y="705.80" width="58.20" height="1.10" rx="0" fill="#4a4a4a"/>
<text x="61.05" y="700.60" font-size="13" fill="#444" textLength="29.90" lengthAdjust="spacingAndGlyphs" stroke="#444" stroke-width="0.35">Bus 4</text>
<rect x="112.30" y="455.40" width="72.30" height="256.80" rx="0" fill="#b1c1dc"/>
<text x="144.96" y="475.00" font-size="12" fill="#222" textLength="6.67" lengthAdjust="spacingAndGlyphs" stroke="#222" stroke-width="0.3">2</text>
<path d="M139.68 507.53A14 14 0 1 1 156.92 507.53" fill="none" stroke="#a6b4cd" stroke-width="3.4" stroke-linecap="butt"/>
<text x="128.30" y="534.60" font-size="12" fill="#333" textLength="9.20" lengthAdjust="spacingAndGlyphs" stroke="#333" stroke-width="0.5">M</text>
<text x="129.22" y="556.20" font-size="12" fill="#333" textLength="7.36" lengthAdjust="spacingAndGlyphs" stroke="#333" stroke-width="0.5">S</text>
<rect x="149.30" y="519.00" width="11.00" height="160.60" rx="0" fill="#e3e5e9"/>
<rect x="165.90" y="520.00" width="5.80" height="57.60" rx="0" fill="#d1dbea"/>
<rect x="165.90" y="577.40" width="5.80" height="101.60" rx="0" fill="#3f8ff2"/>
<rect x="164.50" y="566.20" width="8.60" height="11.20" rx="0" fill="#c8d3e6"/>
<rect x="165.10" y="566.90" width="7.50" height="3.00" rx="0" fill="#8e8e8a"/>
<rect x="163.90" y="571.30" width="10.00" height="1.70" rx="0" fill="#4c6c9e"/>
<rect x="165.10" y="574.20" width="7.50" height="2.50" rx="0" fill="#8e8e8a"/>
<text x="138.10" y="675.40" font-size="13" fill="#1c1c1c" textLength="103.57" lengthAdjust="spacingAndGlyphs" transform="rotate(-90 138.10 675.40)" stroke="#1c1c1c" stroke-width="0.45">Acoustic Bass Drum</text>
<rect x="119.10" y="686.00" width="58.20" height="19.80" rx="0" fill="#d2dae8"/>
<rect x="119.10" y="705.80" width="58.20" height="1.10" rx="0" fill="#4a4a4a"/>
<text x="129.30" y="700.60" font-size="13" fill="#444" textLength="38.00" lengthAdjust="spacingAndGlyphs" stroke="#444" stroke-width="0.35">Master</text>
<rect x="184.60" y="455.40" width="72.30" height="256.80" rx="0" fill="#e5eae0"/>
<text x="217.26" y="475.00" font-size="12" fill="#222" textLength="6.67" lengthAdjust="spacingAndGlyphs" stroke="#222" stroke-width="0.3">3</text>
<path d="M211.98 507.53A14 14 0 1 1 229.22 507.53" fill="none" stroke="#d3d8d1" stroke-width="3.4" stroke-linecap="butt"/>
<text x="200.60" y="534.60" font-size="12" fill="#333" textLength="9.20" lengthAdjust="spacingAndGlyphs" stroke="#333" stroke-width="0.5">M</text>
<text x="201.52" y="556.20" font-size="12" fill="#333" textLength="7.36" lengthAdjust="spacingAndGlyphs" stroke="#333" stroke-width="0.5">S</text>
<rect x="221.60" y="519.00" width="11.00" height="160.60" rx="0" fill="#e8eae5"/>
<rect x="238.20" y="520.00" width="5.80" height="57.60" rx="0" fill="#eff2ed"/>
<rect x="238.20" y="577.40" width="5.80" height="101.60" rx="0" fill="#7fe02c"/>
<rect x="236.80" y="566.20" width="8.60" height="11.20" rx="0" fill="#ecf0e9"/>
<rect x="237.40" y="566.90" width="7.50" height="3.00" rx="0" fill="#8e8e8a"/>
<rect x="236.20" y="571.30" width="10.00" height="1.70" rx="0" fill="#658c4e"/>
<rect x="237.40" y="574.20" width="7.50" height="2.50" rx="0" fill="#8e8e8a"/>
<rect x="191.40" y="686.00" width="58.20" height="19.80" rx="0" fill="#e6eae1"/>
<rect x="191.40" y="705.80" width="58.20" height="1.10" rx="0" fill="#4a4a4a"/>
<text x="201.60" y="700.60" font-size="13" fill="#444" textLength="38.00" lengthAdjust="spacingAndGlyphs" stroke="#444" stroke-width="0.35">Master</text>
<rect x="256.90" y="455.40" width="72.30" height="256.80" rx="0" fill="#a5d4cc"/>
<text x="289.56" y="475.00" font-size="12" fill="#222" textLength="6.67" lengthAdjust="spacingAndGlyphs" stroke="#222" stroke-width="0.3">4</text>
<path d="M284.28 507.53A14 14 0 1 1 301.52 507.53" fill="none" stroke="#9cc4c0" stroke-width="3.4" stroke-linecap="butt"/>
<text x="272.90" y="534.60" font-size="12" fill="#333" textLength="9.20" lengthAdjust="spacingAndGlyphs" stroke="#333" stroke-width="0.5">M</text>
<text x="273.82" y="556.20" font-size="12" fill="#333" textLength="7.36" lengthAdjust="spacingAndGlyphs" stroke="#333" stroke-width="0.5">S</text>
<rect x="293.90" y="519.00" width="11.00" height="160.60" rx="0" fill="#e1e8e7"/>
<rect x="310.50" y="520.00" width="5.80" height="57.60" rx="0" fill="#cae6e1"/>
<rect x="310.50" y="577.40" width="5.80" height="101.60" rx="0" fill="#1fe2c3"/>
<rect x="309.10" y="566.20" width="8.60" height="11.20" rx="0" fill="#c0e0db"/>
<rect x="309.70" y="566.90" width="7.50" height="3.00" rx="0" fill="#8e8e8a"/>
<rect x="308.50" y="571.30" width="10.00" height="1.70" rx="0" fill="#3f8d8b"/>
<rect x="309.70" y="574.20" width="7.50" height="2.50" rx="0" fill="#8e8e8a"/>
<text x="282.70" y="675.40" font-size="13" fill="#1c1c1c" textLength="51.15" lengthAdjust="spacingAndGlyphs" transform="rotate(-90 282.70 675.40)" stroke="#1c1c1c" stroke-width="0.45">Side Stick</text>
<rect x="263.70" y="686.00" width="58.20" height="19.80" rx="0" fill="#cce4e0"/>
<rect x="263.70" y="705.80" width="58.20" height="1.10" rx="0" fill="#4a4a4a"/>
<text x="273.90" y="700.60" font-size="13" fill="#444" textLength="38.00" lengthAdjust="spacingAndGlyphs" stroke="#444" stroke-width="0.35">Master</text>
<rect x="329.20" y="455.40" width="72.30" height="256.80" rx="0" fill="#a9ccb0"/>
<text x="361.86" y="475.00" font-size="12" fill="#222" textLength="6.67" lengthAdjust="spacingAndGlyphs" stroke="#222" stroke-width="0.3">5</text>
<path d="M356.58 507.53A14 14 0 1 1 373.82 507.53" fill="none" stroke="#9fbda7" stroke-width="3.4" stroke-linecap="butt"/>
<text x="345.20" y="534.60" font-size="12" fill="#333" textLength="9.20" lengthAdjust="spacingAndGlyphs" stroke="#333" stroke-width="0.5">M</text>
<text x="346.12" y="556.20" font-size="12" fill="#333" textLength="7.36" lengthAdjust="spacingAndGlyphs" stroke="#333" stroke-width="0.5">S</text>
<rect x="366.20" y="519.00" width="11.00" height="160.60" rx="0" fill="#e1e7e3"/>
<rect x="382.80" y="520.00" width="5.80" height="57.60" rx="0" fill="#cde1d1"/>
<rect x="382.80" y="577.40" width="5.80" height="101.60" rx="0" fill="#27c63c"/>
<rect x="381.40" y="566.20" width="8.60" height="11.20" rx="0" fill="#c2dbc7"/>
<rect x="382.00" y="566.90" width="7.50" height="3.00" rx="0" fill="#8e8e8a"/>
<rect x="380.80" y="571.30" width="10.00" height="1.70" rx="0" fill="#428255"/>
<rect x="382.00" y="574.20" width="7.50" height="2.50" rx="0" fill="#8e8e8a"/>
<text x="355.00" y="675.40" font-size="13" fill="#1c1c1c" textLength="77.37" lengthAdjust="spacingAndGlyphs" transform="rotate(-90 355.00 675.40)" stroke="#1c1c1c" stroke-width="0.45">Acoustic Snare</text>
<rect x="336.00" y="686.00" width="58.20" height="19.80" rx="0" fill="#cee0d2"/>
<rect x="336.00" y="705.80" width="58.20" height="1.10" rx="0" fill="#4a4a4a"/>
<text x="346.20" y="700.60" font-size="13" fill="#444" textLength="38.00" lengthAdjust="spacingAndGlyphs" stroke="#444" stroke-width="0.35">Master</text>
<rect x="402.70" y="456.50" width="70.00" height="254.60" rx="3" fill="#d9b9bd" stroke="#ec5558" stroke-width="2.4"/>
<text x="434.16" y="475.00" font-size="12" fill="#222" textLength="6.67" lengthAdjust="spacingAndGlyphs" stroke="#222" stroke-width="0.3">6</text>
<path d="M428.88 507.53A14 14 0 1 1 446.12 507.53" fill="none" stroke="#c9adb2" stroke-width="3.4" stroke-linecap="butt"/>
<text x="417.50" y="534.60" font-size="12" fill="#333" textLength="9.20" lengthAdjust="spacingAndGlyphs" stroke="#333" stroke-width="0.5">M</text>
<text x="418.42" y="556.20" font-size="12" fill="#333" textLength="7.36" lengthAdjust="spacingAndGlyphs" stroke="#333" stroke-width="0.5">S</text>
<rect x="438.50" y="519.00" width="11.00" height="160.60" rx="0" fill="#e9e4e4"/>
<rect x="455.10" y="520.00" width="5.80" height="57.60" rx="0" fill="#e8d6d8"/>
<rect x="455.10" y="577.40" width="5.80" height="101.60" rx="0" fill="#f05050"/>
<rect x="453.70" y="566.20" width="8.60" height="11.20" rx="0" fill="#e4ced0"/>
<rect x="454.30" y="566.90" width="7.50" height="3.00" rx="0" fill="#8e8e8a"/>
<rect x="453.10" y="571.30" width="10.00" height="1.70" rx="0" fill="#93535d"/>
<rect x="454.30" y="574.20" width="7.50" height="2.50" rx="0" fill="#8e8e8a"/>
<rect x="440.10" y="588.00" width="3.80" height="91.60" rx="0" fill="#f05050"/>
<rect x="445.50" y="588.00" width="3.40" height="91.60" rx="0" fill="#f05050"/>
<rect x="440.10" y="533.60" width="2.80" height="1.60" rx="0" fill="#f05050"/>
<rect x="445.50" y="533.00" width="2.80" height="1.60" rx="0" fill="#f05050"/>
<text x="427.30" y="675.40" font-size="13" fill="#1c1c1c" textLength="71.61" lengthAdjust="spacingAndGlyphs" transform="rotate(-90 427.30 675.40)" stroke="#1c1c1c" stroke-width="0.45">Electric Snare</text>
<rect x="408.30" y="686.00" width="58.20" height="19.80" rx="0" fill="#e6d6d8"/>
<rect x="408.30" y="705.80" width="58.20" height="1.10" rx="0" fill="#4a4a4a"/>
<text x="418.50" y="700.60" font-size="13" fill="#444" textLength="38.00" lengthAdjust="spacingAndGlyphs" stroke="#444" stroke-width="0.35">Master</text>
<rect x="473.80" y="455.40" width="72.30" height="256.80" rx="0" fill="#e5eae0"/>
<text x="506.46" y="475.00" font-size="12" fill="#222" textLength="6.67" lengthAdjust="spacingAndGlyphs" stroke="#222" stroke-width="0.3">7</text>
<path d="M501.18 507.53A14 14 0 1 1 518.42 507.53" fill="none" stroke="#d3d8d1" stroke-width="3.4" stroke-linecap="butt"/>
<text x="489.80" y="534.60" font-size="12" fill="#333" textLength="9.20" lengthAdjust="spacingAndGlyphs" stroke="#333" stroke-width="0.5">M</text>
<text x="490.72" y="556.20" font-size="12" fill="#333" textLength="7.36" lengthAdjust="spacingAndGlyphs" stroke="#333" stroke-width="0.5">S</text>
<rect x="510.80" y="519.00" width="11.00" height="160.60" rx="0" fill="#e8eae5"/>
<rect x="527.40" y="520.00" width="5.80" height="57.60" rx="0" fill="#eff2ed"/>
<rect x="527.40" y="577.40" width="5.80" height="101.60" rx="0" fill="#7fe02c"/>
<rect x="526.00" y="566.20" width="8.60" height="11.20" rx="0" fill="#ecf0e9"/>
<rect x="526.60" y="566.90" width="7.50" height="3.00" rx="0" fill="#8e8e8a"/>
<rect x="525.40" y="571.30" width="10.00" height="1.70" rx="0" fill="#658c4e"/>
<rect x="526.60" y="574.20" width="7.50" height="2.50" rx="0" fill="#8e8e8a"/>
<rect x="480.60" y="686.00" width="58.20" height="19.80" rx="0" fill="#e6eae1"/>
<rect x="480.60" y="705.80" width="58.20" height="1.10" rx="0" fill="#4a4a4a"/>
<text x="490.80" y="700.60" font-size="13" fill="#444" textLength="38.00" lengthAdjust="spacingAndGlyphs" stroke="#444" stroke-width="0.35">Master</text>
<rect x="546.10" y="455.40" width="72.30" height="256.80" rx="0" fill="#dcbcad"/>
<text x="578.76" y="475.00" font-size="12" fill="#222" textLength="6.67" lengthAdjust="spacingAndGlyphs" stroke="#222" stroke-width="0.3">8</text>
<path d="M573.48 507.53A14 14 0 1 1 590.72 507.53" fill="none" stroke="#cbb0a5" stroke-width="3.4" stroke-linecap="butt"/>
<text x="562.10" y="534.60" font-size="12" fill="#333" textLength="9.20" lengthAdjust="spacingAndGlyphs" stroke="#333" stroke-width="0.5">M</text>
<text x="563.02" y="556.20" font-size="12" fill="#333" textLength="7.36" lengthAdjust="spacingAndGlyphs" stroke="#333" stroke-width="0.5">S</text>
<rect x="583.10" y="519.00" width="11.00" height="160.60" rx="0" fill="#e9e4e2"/>
<rect x="599.70" y="520.00" width="5.80" height="57.60" rx="0" fill="#ead8cf"/>
<rect x="599.70" y="577.40" width="5.80" height="101.60" rx="0" fill="#f07d3c"/>
<rect x="598.30" y="566.20" width="8.60" height="11.20" rx="0" fill="#e6d0c5"/>
<rect x="598.90" y="566.90" width="7.50" height="3.00" rx="0" fill="#8e8e8a"/>
<rect x="597.70" y="571.30" width="10.00" height="1.70" rx="0" fill="#936555"/>
<rect x="598.90" y="574.20" width="7.50" height="2.50" rx="0" fill="#8e8e8a"/>
<text x="571.90" y="675.40" font-size="13" fill="#1c1c1c" textLength="54.36" lengthAdjust="spacingAndGlyphs" transform="rotate(-90 571.90 675.40)" stroke="#1c1c1c" stroke-width="0.45">Hand Clap</text>
<rect x="552.90" y="686.00" width="58.20" height="19.80" rx="0" fill="#e8d8d0"/>
<rect x="552.90" y="705.80" width="58.20" height="1.10" rx="0" fill="#4a4a4a"/>
<text x="563.10" y="700.60" font-size="13" fill="#444" textLength="38.00" lengthAdjust="spacingAndGlyphs" stroke="#444" stroke-width="0.35">Master</text>
<rect x="618.40" y="455.40" width="72.30" height="256.80" rx="0" fill="#dcc8a9"/>
<text x="651.06" y="475.00" font-size="12" fill="#222" textLength="6.67" lengthAdjust="spacingAndGlyphs" stroke="#222" stroke-width="0.3">9</text>
<path d="M645.78 507.53A14 14 0 1 1 663.02 507.53" fill="none" stroke="#cbbaa1" stroke-width="3.4" stroke-linecap="butt"/>
<text x="634.40" y="534.60" font-size="12" fill="#333" textLength="9.20" lengthAdjust="spacingAndGlyphs" stroke="#333" stroke-width="0.5">M</text>
<text x="635.32" y="556.20" font-size="12" fill="#333" textLength="7.36" lengthAdjust="spacingAndGlyphs" stroke="#333" stroke-width="0.5">S</text>
<rect x="655.40" y="519.00" width="11.00" height="160.60" rx="0" fill="#e9e6e1"/>
<rect x="672.00" y="520.00" width="5.80" height="57.60" rx="0" fill="#eadfcd"/>
<rect x="672.00" y="577.40" width="5.80" height="101.60" rx="0" fill="#f0a51e"/>
<rect x="670.60" y="566.20" width="8.60" height="11.20" rx="0" fill="#e6d8c2"/>
<rect x="671.20" y="566.90" width="7.50" height="3.00" rx="0" fill="#8e8e8a"/>
<rect x="670.00" y="571.30" width="10.00" height="1.70" rx="0" fill="#937549"/>
<rect x="671.20" y="574.20" width="7.50" height="2.50" rx="0" fill="#8e8e8a"/>
<text x="644.20" y="675.40" font-size="13" fill="#1c1c1c" textLength="75.23" lengthAdjust="spacingAndGlyphs" transform="rotate(-90 644.20 675.40)" stroke="#1c1c1c" stroke-width="0.45">Low Floor Tom</text>
<rect x="625.20" y="686.00" width="58.20" height="19.80" rx="0" fill="#e8dece"/>
<rect x="625.20" y="705.80" width="58.20" height="1.10" rx="0" fill="#4a4a4a"/>
<text x="635.40" y="700.60" font-size="13" fill="#444" textLength="38.00" lengthAdjust="spacingAndGlyphs" stroke="#444" stroke-width="0.35">Master</text>
<rect x="690.70" y="455.40" width="72.30" height="256.80" rx="0" fill="#bcd4a9"/>
<text x="720.03" y="475.00" font-size="12" fill="#222" textLength="13.35" lengthAdjust="spacingAndGlyphs" stroke="#222" stroke-width="0.3">10</text>
<path d="M718.08 507.53A14 14 0 1 1 735.32 507.53" fill="none" stroke="#b0c4a1" stroke-width="3.4" stroke-linecap="butt"/>
<text x="706.70" y="534.60" font-size="12" fill="#333" textLength="9.20" lengthAdjust="spacingAndGlyphs" stroke="#333" stroke-width="0.5">M</text>
<text x="707.62" y="556.20" font-size="12" fill="#333" textLength="7.36" lengthAdjust="spacingAndGlyphs" stroke="#333" stroke-width="0.5">S</text>
<rect x="727.70" y="519.00" width="11.00" height="160.60" rx="0" fill="#e4e8e1"/>
<rect x="744.30" y="520.00" width="5.80" height="57.60" rx="0" fill="#d8e6cd"/>
<rect x="744.30" y="577.40" width="5.80" height="101.60" rx="0" fill="#7fe02c"/>
<rect x="742.90" y="566.20" width="8.60" height="11.20" rx="0" fill="#d0e0c2"/>
<rect x="743.50" y="566.90" width="7.50" height="3.00" rx="0" fill="#8e8e8a"/>
<rect x="742.30" y="571.30" width="10.00" height="1.70" rx="0" fill="#658c4e"/>
<rect x="743.50" y="574.20" width="7.50" height="2.50" rx="0" fill="#8e8e8a"/>
<text x="716.50" y="675.40" font-size="13" fill="#1c1c1c" textLength="77.79" lengthAdjust="spacingAndGlyphs" transform="rotate(-90 716.50 675.40)" stroke="#1c1c1c" stroke-width="0.45">High Floor Tom</text>
<rect x="697.50" y="686.00" width="58.20" height="19.80" rx="0" fill="#d8e4ce"/>
<rect x="697.50" y="705.80" width="58.20" height="1.10" rx="0" fill="#4a4a4a"/>
<text x="707.70" y="700.60" font-size="13" fill="#444" textLength="38.00" lengthAdjust="spacingAndGlyphs" stroke="#444" stroke-width="0.35">Master</text>
<rect x="763.00" y="455.40" width="72.30" height="256.80" rx="0" fill="#b1c4a3"/>
<text x="792.77" y="475.00" font-size="12" fill="#222" textLength="12.46" lengthAdjust="spacingAndGlyphs" stroke="#222" stroke-width="0.3">11</text>
<path d="M790.38 507.53A14 14 0 1 1 807.62 507.53" fill="none" stroke="#a6b79c" stroke-width="3.4" stroke-linecap="butt"/>
<text x="779.00" y="534.60" font-size="12" fill="#333" textLength="9.20" lengthAdjust="spacingAndGlyphs" stroke="#333" stroke-width="0.5">M</text>
<text x="779.92" y="556.20" font-size="12" fill="#333" textLength="7.36" lengthAdjust="spacingAndGlyphs" stroke="#333" stroke-width="0.5">S</text>
<rect x="800.00" y="519.00" width="11.00" height="160.60" rx="0" fill="#e3e6e1"/>
<rect x="816.60" y="520.00" width="5.80" height="57.60" rx="0" fill="#d1dcc9"/>
<rect x="816.60" y="577.40" width="5.80" height="101.60" rx="0" fill="#559e1c"/>
<rect x="815.20" y="566.20" width="8.60" height="11.20" rx="0" fill="#c8d5be"/>
<rect x="815.80" y="566.90" width="7.50" height="3.00" rx="0" fill="#8e8e8a"/>
<rect x="814.60" y="571.30" width="10.00" height="1.70" rx="0" fill="#557248"/>
<rect x="815.80" y="574.20" width="7.50" height="2.50" rx="0" fill="#8e8e8a"/>
<text x="788.80" y="675.40" font-size="13" fill="#1c1c1c" textLength="57.57" lengthAdjust="spacingAndGlyphs" transform="rotate(-90 788.80 675.40)" stroke="#1c1c1c" stroke-width="0.45">Low Bongo</text>
<rect x="769.80" y="686.00" width="58.20" height="19.80" rx="0" fill="#d2dccb"/>
<rect x="769.80" y="705.80" width="58.20" height="1.10" rx="0" fill="#4a4a4a"/>
<text x="780.00" y="700.60" font-size="13" fill="#444" textLength="38.00" lengthAdjust="spacingAndGlyphs" stroke="#444" stroke-width="0.35">Master</text>
</g>
<rect x="41.20" y="714.60" width="119.60" height="5.20" rx="2.6" fill="#7b9dc9"/>
<rect x="791.00" y="455.40" width="406.00" height="265.80" rx="0" fill="#dedede"/>
<text x="808.60" y="609.60" font-size="13.6" font-weight="bold" fill="#2a2a2a" textLength="43.40" lengthAdjust="spacingAndGlyphs" transform="rotate(-90 808.60 609.60)">BUSES</text>
<rect x="821.30" y="455.40" width="93.00" height="265.80" rx="0" fill="#dadada"/>
<rect x="820.00" y="455.40" width="1.30" height="265.80" rx="0" fill="#e6e6e6"/>
<text x="852.77" y="471.60" font-size="12" fill="#222" textLength="29.46" lengthAdjust="spacingAndGlyphs" stroke="#222" stroke-width="0.3">Bus 1</text>
<path d="M838.20 518.47A14.3 14.3 0 1 1 855.80 518.47" fill="none" stroke="#cdcdcd" stroke-width="3.6" stroke-linecap="butt"/>
<text x="836.15" y="541.40" font-size="12.2" fill="#444" textLength="21.71" lengthAdjust="spacingAndGlyphs">Pan</text>
<path d="M838.00 587.72A14 14 0 1 1 856.00 587.72" fill="none" stroke="#1657a5" stroke-width="4.6" stroke-linecap="butt"/>
<text x="831.41" y="610.00" font-size="12.2" fill="#333" textLength="31.18" lengthAdjust="spacingAndGlyphs">Width</text>
<text x="841.48" y="648.40" font-size="13.8" font-weight="bold" fill="#444" textLength="11.04" lengthAdjust="spacingAndGlyphs">M</text>
<text x="842.58" y="671.40" font-size="13.8" font-weight="bold" fill="#444" textLength="8.84" lengthAdjust="spacingAndGlyphs">S</text>
<rect x="875.00" y="489.00" width="11.20" height="190.60" rx="0" fill="#e9e9e9"/>
<rect x="893.10" y="491.00" width="8.40" height="69.00" rx="0" fill="#e8e8e8"/>
<rect x="893.10" y="560.00" width="8.40" height="118.60" rx="0" fill="#1657a5"/>
<rect x="890.90" y="544.60" width="12.80" height="15.60" rx="0" fill="#e9e9e9"/>
<rect x="891.10" y="545.00" width="12.40" height="4.30" rx="0" fill="#a3a3a0"/>
<rect x="890.10" y="551.30" width="14.20" height="2.20" rx="0" fill="#1657a5"/>
<rect x="891.10" y="555.00" width="12.40" height="4.00" rx="0" fill="#a3a3a0"/>
<rect x="829.00" y="690.00" width="78.30" height="19.60" rx="0" fill="#e4e4e4"/>
<rect x="829.00" y="709.50" width="78.30" height="1.00" rx="0" fill="#8c8c8c"/>
<text x="849.63" y="704.60" font-size="13" fill="#9c9c9c" textLength="36.95" lengthAdjust="spacingAndGlyphs">Master</text>
<rect x="915.50" y="455.40" width="93.00" height="265.80" rx="0" fill="#dadada"/>
<rect x="914.20" y="455.40" width="1.30" height="265.80" rx="0" fill="#e6e6e6"/>
<text x="946.97" y="471.60" font-size="12" fill="#222" textLength="29.46" lengthAdjust="spacingAndGlyphs" stroke="#222" stroke-width="0.3">Bus 2</text>
<path d="M932.40 518.47A14.3 14.3 0 1 1 950.00 518.47" fill="none" stroke="#cdcdcd" stroke-width="3.6" stroke-linecap="butt"/>
<text x="930.35" y="541.40" font-size="12.2" fill="#444" textLength="21.71" lengthAdjust="spacingAndGlyphs">Pan</text>
<path d="M932.20 587.72A14 14 0 1 1 950.20 587.72" fill="none" stroke="#1657a5" stroke-width="4.6" stroke-linecap="butt"/>
<text x="925.61" y="610.00" font-size="12.2" fill="#333" textLength="31.18" lengthAdjust="spacingAndGlyphs">Width</text>
<text x="935.68" y="648.40" font-size="13.8" font-weight="bold" fill="#444" textLength="11.04" lengthAdjust="spacingAndGlyphs">M</text>
<text x="936.78" y="671.40" font-size="13.8" font-weight="bold" fill="#444" textLength="8.84" lengthAdjust="spacingAndGlyphs">S</text>
<rect x="969.20" y="489.00" width="11.20" height="190.60" rx="0" fill="#e9e9e9"/>
<rect x="987.30" y="491.00" width="8.40" height="69.00" rx="0" fill="#e8e8e8"/>
<rect x="987.30" y="560.00" width="8.40" height="118.60" rx="0" fill="#1657a5"/>
<rect x="985.10" y="544.60" width="12.80" height="15.60" rx="0" fill="#e9e9e9"/>
<rect x="985.30" y="545.00" width="12.40" height="4.30" rx="0" fill="#a3a3a0"/>
<rect x="984.30" y="551.30" width="14.20" height="2.20" rx="0" fill="#1657a5"/>
<rect x="985.30" y="555.00" width="12.40" height="4.00" rx="0" fill="#a3a3a0"/>
<rect x="923.20" y="690.00" width="78.30" height="19.60" rx="0" fill="#e4e4e4"/>
<rect x="923.20" y="709.50" width="78.30" height="1.00" rx="0" fill="#8c8c8c"/>
<text x="943.83" y="704.60" font-size="13" fill="#9c9c9c" textLength="36.95" lengthAdjust="spacingAndGlyphs">Master</text>
<rect x="1009.70" y="455.40" width="93.00" height="265.80" rx="0" fill="#dadada"/>
<rect x="1008.40" y="455.40" width="1.30" height="265.80" rx="0" fill="#e6e6e6"/>
<text x="1041.17" y="471.60" font-size="12" fill="#222" textLength="29.46" lengthAdjust="spacingAndGlyphs" stroke="#222" stroke-width="0.3">Bus 3</text>
<path d="M1026.60 518.47A14.3 14.3 0 1 1 1044.20 518.47" fill="none" stroke="#cdcdcd" stroke-width="3.6" stroke-linecap="butt"/>
<text x="1024.55" y="541.40" font-size="12.2" fill="#444" textLength="21.71" lengthAdjust="spacingAndGlyphs">Pan</text>
<path d="M1026.40 587.72A14 14 0 1 1 1044.40 587.72" fill="none" stroke="#1657a5" stroke-width="4.6" stroke-linecap="butt"/>
<text x="1019.81" y="610.00" font-size="12.2" fill="#333" textLength="31.18" lengthAdjust="spacingAndGlyphs">Width</text>
<text x="1029.88" y="648.40" font-size="13.8" font-weight="bold" fill="#444" textLength="11.04" lengthAdjust="spacingAndGlyphs">M</text>
<text x="1030.98" y="671.40" font-size="13.8" font-weight="bold" fill="#444" textLength="8.84" lengthAdjust="spacingAndGlyphs">S</text>
<rect x="1063.40" y="489.00" width="11.20" height="190.60" rx="0" fill="#e9e9e9"/>
<rect x="1081.50" y="491.00" width="8.40" height="69.00" rx="0" fill="#e8e8e8"/>
<rect x="1081.50" y="560.00" width="8.40" height="118.60" rx="0" fill="#1657a5"/>
<rect x="1079.30" y="544.60" width="12.80" height="15.60" rx="0" fill="#e9e9e9"/>
<rect x="1079.50" y="545.00" width="12.40" height="4.30" rx="0" fill="#a3a3a0"/>
<rect x="1078.50" y="551.30" width="14.20" height="2.20" rx="0" fill="#1657a5"/>
<rect x="1079.50" y="555.00" width="12.40" height="4.00" rx="0" fill="#a3a3a0"/>
<rect x="1017.40" y="690.00" width="78.30" height="19.60" rx="0" fill="#e4e4e4"/>
<rect x="1017.40" y="709.50" width="78.30" height="1.00" rx="0" fill="#8c8c8c"/>
<text x="1038.03" y="704.60" font-size="13" fill="#9c9c9c" textLength="36.95" lengthAdjust="spacingAndGlyphs">Master</text>
<rect x="1103.90" y="455.40" width="93.00" height="265.80" rx="0" fill="#dadada"/>
<rect x="1102.60" y="455.40" width="1.30" height="265.80" rx="0" fill="#e6e6e6"/>
<text x="1135.37" y="471.60" font-size="12" fill="#222" textLength="29.46" lengthAdjust="spacingAndGlyphs" stroke="#222" stroke-width="0.3">Bus 4</text>
<path d="M1120.80 518.47A14.3 14.3 0 1 1 1138.40 518.47" fill="none" stroke="#cdcdcd" stroke-width="3.6" stroke-linecap="butt"/>
<text x="1118.75" y="541.40" font-size="12.2" fill="#444" textLength="21.71" lengthAdjust="spacingAndGlyphs">Pan</text>
<path d="M1120.60 587.72A14 14 0 1 1 1138.60 587.72" fill="none" stroke="#1657a5" stroke-width="4.6" stroke-linecap="butt"/>
<text x="1114.01" y="610.00" font-size="12.2" fill="#333" textLength="31.18" lengthAdjust="spacingAndGlyphs">Width</text>
<text x="1124.08" y="648.40" font-size="13.8" font-weight="bold" fill="#444" textLength="11.04" lengthAdjust="spacingAndGlyphs">M</text>
<text x="1125.18" y="671.40" font-size="13.8" font-weight="bold" fill="#444" textLength="8.84" lengthAdjust="spacingAndGlyphs">S</text>
<rect x="1157.60" y="489.00" width="11.20" height="190.60" rx="0" fill="#e9e9e9"/>
<rect x="1175.70" y="491.00" width="8.40" height="69.00" rx="0" fill="#e8e8e8"/>
<rect x="1175.70" y="560.00" width="8.40" height="118.60" rx="0" fill="#1657a5"/>
<rect x="1173.50" y="544.60" width="12.80" height="15.60" rx="0" fill="#e9e9e9"/>
<rect x="1173.70" y="545.00" width="12.40" height="4.30" rx="0" fill="#a3a3a0"/>
<rect x="1172.70" y="551.30" width="14.20" height="2.20" rx="0" fill="#1657a5"/>
<rect x="1173.70" y="555.00" width="12.40" height="4.00" rx="0" fill="#a3a3a0"/>
<rect x="1157.60" y="489.00" width="11.20" height="2.60" rx="0" fill="#e03030"/>
<rect x="1111.60" y="690.00" width="78.30" height="19.60" rx="0" fill="#e4e4e4"/>
<rect x="1111.60" y="709.50" width="78.30" height="1.00" rx="0" fill="#8c8c8c"/>
<text x="1132.23" y="704.60" font-size="13" fill="#9c9c9c" textLength="36.95" lengthAdjust="spacingAndGlyphs">Master</text>
<rect x="2.00" y="454.70" width="1196.00" height="0.80" rx="0" fill="#8c8482"/>
<rect x="2.00" y="455.50" width="1196.00" height="1.10" rx="0" fill="#6a6462" opacity="0.25"/>
<linearGradient id="sh" x1="0" y1="0" x2="0" y2="1"><stop offset="0" stop-color="#6e6e6e" stop-opacity="0.7"/><stop offset="1" stop-color="#6e6e6e" stop-opacity="0"/></linearGradient>
<rect x="1.50" y="45.20" width="1196.70" height="3.60" rx="0" fill="url(#sh)"/>
<rect x="1.50" y="44.00" width="1196.70" height="1.40" rx="0" fill="#828282"/>
<rect x="2.00" y="721.00" width="1196.00" height="28.40" rx="0" fill="#e5e5e5"/>
<rect x="2.00" y="720.80" width="1196.00" height="0.70" rx="0" fill="#dadada"/>
<rect x="601.00" y="721.60" width="199.00" height="27.80" rx="0" fill="#1657a5"/>
<text x="65.97" y="739.00" font-size="12" fill="#444" textLength="68.07" lengthAdjust="spacingAndGlyphs" stroke="#444" stroke-width="0.25">PAD LAYERS</text>
<text x="275.74" y="739.00" font-size="12" fill="#444" textLength="48.53" lengthAdjust="spacingAndGlyphs" stroke="#444" stroke-width="0.25">PAD SEQ</text>
<text x="455.69" y="739.00" font-size="12" fill="#444" textLength="88.62" lengthAdjust="spacingAndGlyphs" stroke="#444" stroke-width="0.25">PAD EQ / SENDS</text>
<text x="682.33" y="739.00" font-size="12" font-weight="bold" fill="#fff" textLength="35.34" lengthAdjust="spacingAndGlyphs">MIXER</text>
<text x="879.95" y="739.00" font-size="12" fill="#444" textLength="40.10" lengthAdjust="spacingAndGlyphs" stroke="#444" stroke-width="0.25">SLICER</text>
<text x="1053.43" y="739.00" font-size="12" fill="#444" textLength="93.14" lengthAdjust="spacingAndGlyphs" stroke="#444" stroke-width="0.25">BUSES / MASTER</text>
<rect x="1194.00" y="745.40" width="1.60" height="1.60" rx="0" fill="#555"/>
<rect x="1191.00" y="745.40" width="1.60" height="1.60" rx="0" fill="#555"/>
<rect x="1188.00" y="745.40" width="1.60" height="1.60" rx="0" fill="#555"/>
<rect x="1194.00" y="742.40" width="1.60" height="1.60" rx="0" fill="#555"/>
<rect x="1191.00" y="742.40" width="1.60" height="1.60" rx="0" fill="#555"/>
<rect x="1194.00" y="739.40" width="1.60" height="1.60" rx="0" fill="#555"/>
<rect x="0.00" y="749.60" width="1201.00" height="1.40" rx="0" fill="#4b5560"/>
<rect x="1199.70" y="0.00" width="1.30" height="751.00" rx="0" fill="#4b5560"/>
</svg></body></html>
